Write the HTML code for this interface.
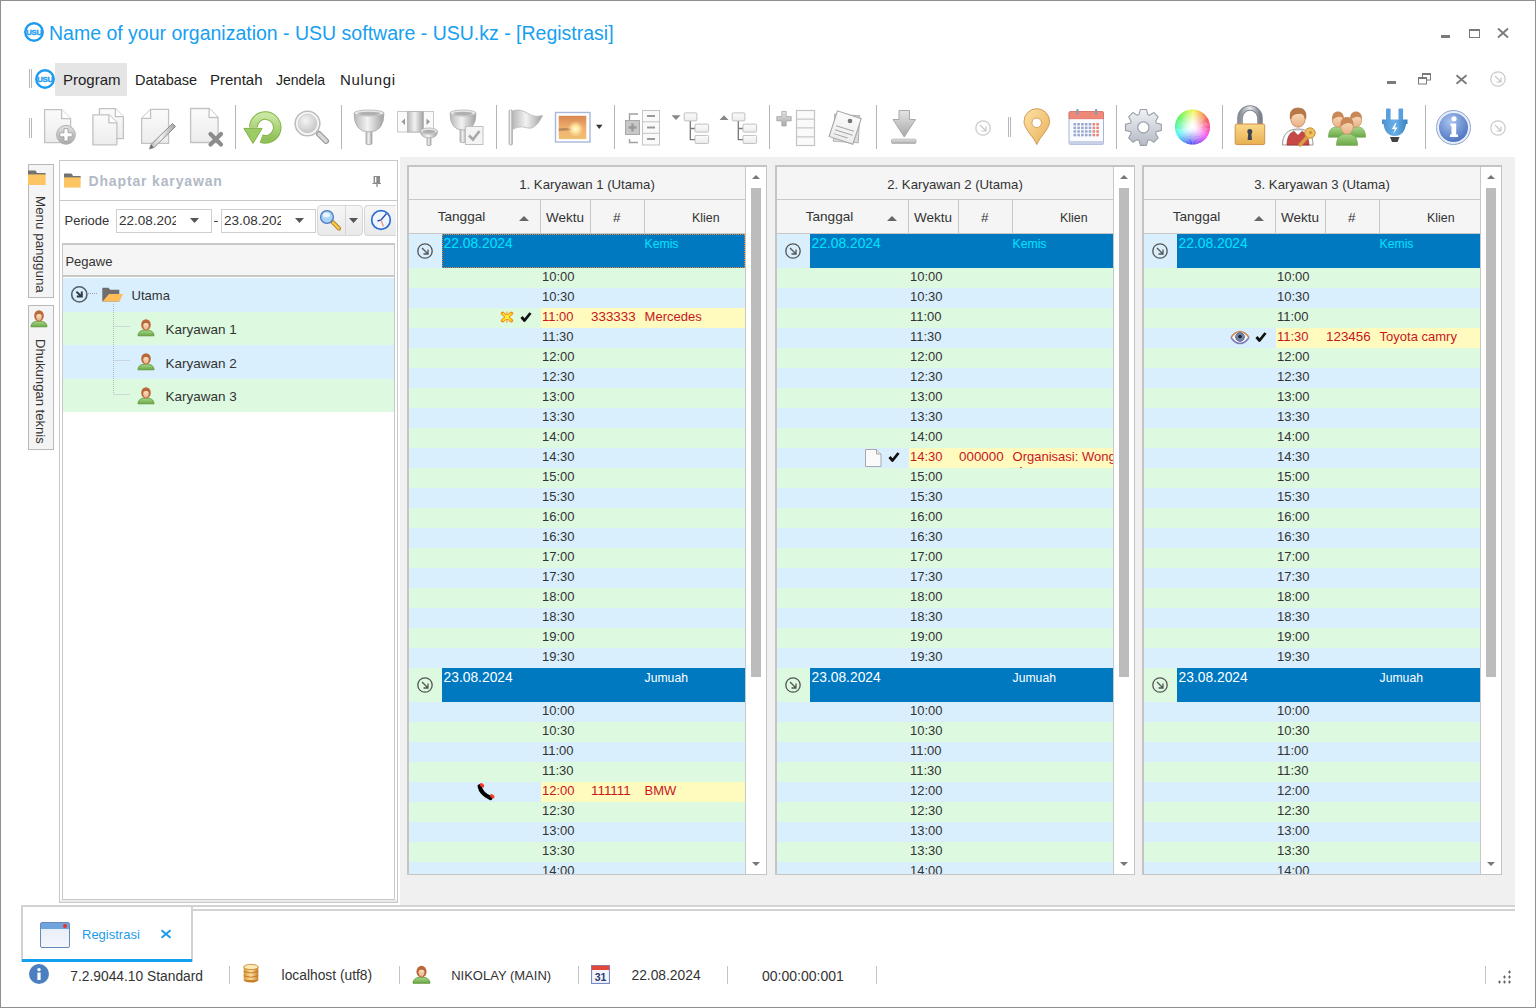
<!DOCTYPE html><html><head><meta charset="utf-8"><style>
html,body{margin:0;padding:0;}
body{width:1536px;height:1008px;overflow:hidden;position:relative;background:#fff;font-family:'Liberation Sans', sans-serif;}
div{box-sizing:border-box;}
svg{position:absolute;overflow:visible;}
</style></head><body><svg width="0" height="0" style="position:absolute"><defs>
<linearGradient id="gDoc" x1="0" y1="0" x2="0" y2="1"><stop offset="0" stop-color="#fbfbfb"/><stop offset="1" stop-color="#ececec"/></linearGradient>
<linearGradient id="gGray" x1="0" y1="0" x2="0" y2="1"><stop offset="0" stop-color="#e4e4e4"/><stop offset="1" stop-color="#a8a8a8"/></linearGradient>
<linearGradient id="gGrayH" x1="0" y1="0" x2="1" y2="0"><stop offset="0" stop-color="#b8b8b8"/><stop offset="0.45" stop-color="#f2f2f2"/><stop offset="1" stop-color="#a0a0a0"/></linearGradient>
<linearGradient id="gGreen" x1="0" y1="0" x2="0" y2="1"><stop offset="0" stop-color="#c8e6a0"/><stop offset="1" stop-color="#90c058"/></linearGradient>
<radialGradient id="gLens" cx="0.4" cy="0.35" r="0.7"><stop offset="0" stop-color="#f4f4f4"/><stop offset="1" stop-color="#c4c4c4"/></radialGradient>
<linearGradient id="gPin" x1="0" y1="0" x2="1" y2="1"><stop offset="0" stop-color="#fde3a8"/><stop offset="1" stop-color="#e8b058"/></linearGradient>
<linearGradient id="gLock" x1="0" y1="0" x2="0" y2="1"><stop offset="0" stop-color="#fbd88a"/><stop offset="1" stop-color="#e8b050"/></linearGradient>
<linearGradient id="gShackle" x1="0" y1="0" x2="1" y2="0"><stop offset="0" stop-color="#8a8f98"/><stop offset="0.5" stop-color="#e8eaee"/><stop offset="1" stop-color="#7a808a"/></linearGradient>
<linearGradient id="gPhoto" x1="0" y1="0" x2="0" y2="1"><stop offset="0" stop-color="#d88850"/><stop offset="0.55" stop-color="#f0b070"/><stop offset="1" stop-color="#f0c070"/></linearGradient>
<radialGradient id="gSun" cx="0.5" cy="0.5" r="0.5"><stop offset="0" stop-color="#fffbe0"/><stop offset="0.4" stop-color="#ffe7a0"/><stop offset="1" stop-color="#ffe0a0" stop-opacity="0"/></radialGradient>
<linearGradient id="gGear" x1="0" y1="0" x2="0" y2="1"><stop offset="0" stop-color="#f0f2f5"/><stop offset="1" stop-color="#b4bac4"/></linearGradient>
<radialGradient id="gInfo" cx="0.4" cy="0.3" r="0.75"><stop offset="0" stop-color="#a8c4ee"/><stop offset="1" stop-color="#4a70c0"/></radialGradient>
<linearGradient id="gPlug" x1="0" y1="0" x2="1" y2="0"><stop offset="0" stop-color="#4a90cc"/><stop offset="0.5" stop-color="#6ab0e8"/><stop offset="1" stop-color="#3a80c0"/></linearGradient>
<linearGradient id="gSkin" x1="0" y1="0" x2="0" y2="1"><stop offset="0" stop-color="#fde0c0"/><stop offset="1" stop-color="#e8b088"/></linearGradient>
<linearGradient id="gBodyG" x1="0" y1="0" x2="0" y2="1"><stop offset="0" stop-color="#a8d888"/><stop offset="1" stop-color="#6aa848"/></linearGradient>
<linearGradient id="gDB" x1="0" y1="0" x2="1" y2="0"><stop offset="0" stop-color="#d89838"/><stop offset="0.5" stop-color="#fde0a0"/><stop offset="1" stop-color="#c88028"/></linearGradient>
</defs></svg><div style="position:absolute;left:0px;top:0px;width:1536px;height:1008px;border:1px solid #8f8f8f;"></div><svg style="left:24px;top:22px" width="20" height="20" viewBox="0 0 20 20"><circle cx="10" cy="10" r="8.75" fill="none" stroke="#1e9bf0" stroke-width="2.4"/><text x="10" y="12.7" text-anchor="middle" font-family="Liberation Sans" font-weight="bold" font-size="7.8" letter-spacing="-0.4" fill="#1e9bf0" stroke="#1e9bf0" stroke-width="0.35">USU</text></svg><div style="position:absolute;left:49px;top:24.09px;font-size:19.5px;line-height:19.5px;height:19.5px;white-space:pre;color:#17a0f0;font-family:'Liberation Sans', sans-serif;letter-spacing:0px;">Name of your organization - USU software - USU.kz - [Registrasi]</div><div style="position:absolute;left:1441px;top:35px;width:9px;height:3px;background:#7a7a7a"></div><div style="position:absolute;left:1469px;top:29px;width:11px;height:9px;border:1px solid #7a7a7a;border-top-width:2px;"></div><svg style="left:1497px;top:28px" width="12" height="10" viewBox="0 0 12 10"><path d="M1 0.5L11 9.5M11 0.5L1 9.5" stroke="#7a7a7a" stroke-width="1.8"/></svg><div style="position:absolute;left:29px;top:69px;width:1px;height:19px;background:#b8b8b8"></div><div style="position:absolute;left:31px;top:69px;width:1px;height:19px;background:#b8b8b8"></div><svg style="left:35px;top:69px" width="20" height="20" viewBox="0 0 20 20"><circle cx="10" cy="10" r="8.75" fill="none" stroke="#1e9bf0" stroke-width="2.4"/><text x="10" y="12.7" text-anchor="middle" font-family="Liberation Sans" font-weight="bold" font-size="7.8" letter-spacing="-0.4" fill="#1e9bf0" stroke="#1e9bf0" stroke-width="0.35">USU</text></svg><div style="position:absolute;left:55px;top:63px;width:72px;height:33px;background:#e5e5e5;"></div><div style="position:absolute;left:63px;top:72.30px;font-size:15px;line-height:15px;height:15px;white-space:pre;color:#222;font-family:'Liberation Sans', sans-serif;letter-spacing:0px;">Program</div><div style="position:absolute;left:135px;top:72.73px;font-size:14.5px;line-height:14.5px;height:14.5px;white-space:pre;color:#222;font-family:'Liberation Sans', sans-serif;letter-spacing:0px;">Database</div><div style="position:absolute;left:210px;top:72.30px;font-size:15px;line-height:15px;height:15px;white-space:pre;color:#222;font-family:'Liberation Sans', sans-serif;letter-spacing:0px;">Prentah</div><div style="position:absolute;left:276px;top:73.15px;font-size:14px;line-height:14px;height:14px;white-space:pre;color:#222;font-family:'Liberation Sans', sans-serif;letter-spacing:0px;">Jendela</div><div style="position:absolute;left:340px;top:72.30px;font-size:15px;line-height:15px;height:15px;white-space:pre;color:#222;font-family:'Liberation Sans', sans-serif;letter-spacing:0.7px;">Nulungi</div><div style="position:absolute;left:1387px;top:81px;width:9px;height:3px;background:#7a7a7a"></div><svg style="left:1418px;top:73px" width="14" height="12" viewBox="0 0 14 12"><rect x="4.5" y="0.5" width="8" height="6.5" fill="none" stroke="#7a7a7a" stroke-width="1"/><rect x="4.5" y="0.5" width="8" height="1.5" fill="#7a7a7a"/><rect x="0.5" y="4.5" width="8" height="6.5" fill="#fff" stroke="#7a7a7a" stroke-width="1"/><rect x="0.5" y="4.5" width="8" height="1.5" fill="#7a7a7a"/></svg><svg style="left:1456px;top:75px" width="11" height="9" viewBox="0 0 11 9"><path d="M0.5 0.3L10.5 8.7M10.5 0.3L0.5 8.7" stroke="#7a7a7a" stroke-width="1.8"/></svg><svg style="left:1490px;top:71px" width="16" height="16" viewBox="0 0 16 16"><circle cx="8" cy="8" r="7.2" fill="none" stroke="#c8c8c8" stroke-width="1.2"/><path d="M5 5L11 11M11 6.5V11H6.5" fill="none" stroke="#c8c8c8" stroke-width="1.2"/></svg><div style="position:absolute;left:29px;top:118px;width:1px;height:20px;background:#b8b8b8"></div><div style="position:absolute;left:31px;top:118px;width:1px;height:20px;background:#b8b8b8"></div><div style="position:absolute;left:235px;top:105px;width:1px;height:44px;background:#b4b4b4"></div><div style="position:absolute;left:341px;top:105px;width:1px;height:44px;background:#b4b4b4"></div><div style="position:absolute;left:496px;top:105px;width:1px;height:44px;background:#b4b4b4"></div><div style="position:absolute;left:614px;top:105px;width:1px;height:44px;background:#b4b4b4"></div><div style="position:absolute;left:769px;top:105px;width:1px;height:44px;background:#b4b4b4"></div><div style="position:absolute;left:876px;top:105px;width:1px;height:44px;background:#b4b4b4"></div><div style="position:absolute;left:1116px;top:105px;width:1px;height:44px;background:#b4b4b4"></div><div style="position:absolute;left:1222px;top:105px;width:1px;height:44px;background:#b4b4b4"></div><div style="position:absolute;left:1425px;top:105px;width:1px;height:44px;background:#b4b4b4"></div><div style="position:absolute;left:1008px;top:117px;width:1px;height:20px;background:#b8b8b8"></div><div style="position:absolute;left:1010px;top:117px;width:1px;height:20px;background:#b8b8b8"></div><svg style="left:975px;top:120px" width="16" height="16" viewBox="0 0 16 16"><circle cx="8" cy="8" r="7.2" fill="none" stroke="#c8c8c8" stroke-width="1.2"/><path d="M5 5L11 11M11 6.5V11H6.5" fill="none" stroke="#c8c8c8" stroke-width="1.2"/></svg><svg style="left:1490px;top:120px" width="16" height="16" viewBox="0 0 16 16"><circle cx="8" cy="8" r="7.2" fill="none" stroke="#c8c8c8" stroke-width="1.2"/><path d="M5 5L11 11M11 6.5V11H6.5" fill="none" stroke="#c8c8c8" stroke-width="1.2"/></svg><svg style="left:40px;top:104px" width="40" height="44" viewBox="0 0 40 44"><path d="M4.6 5.6H21.6L30.6 14.6V38.6H4.6Z" fill="url(#gDoc)" stroke="#c2c2c2" stroke-width="1.3" stroke-linejoin="round"/><path d="M21.6 5.6V14.6H30.6" fill="#fff" stroke="#c2c2c2" stroke-width="1.3" stroke-linejoin="round"/><circle cx="26" cy="30.8" r="9.4" fill="url(#gGray)" stroke="#b0b0b0" stroke-width="1"/><path d="M24 24.6h4v4.2h4.2v4h-4.2v4.2h-4v-4.2h-4.2v-4h4.2z" fill="#fff" stroke="#9a9a9a" stroke-width="0.8"/></svg><svg style="left:88px;top:104px" width="40" height="44" viewBox="0 0 40 44"><path d="M11.4 4.6H27.4L35.4 12.6V34.6H11.4Z" fill="url(#gDoc)" stroke="#c2c2c2" stroke-width="1.3" stroke-linejoin="round"/><path d="M27.4 4.6V12.6H35.4" fill="#fff" stroke="#c2c2c2" stroke-width="1.3" stroke-linejoin="round"/><path d="M4.9 10.8H20.9L28.9 18.8V40.8H4.9Z" fill="url(#gDoc)" stroke="#c2c2c2" stroke-width="1.3" stroke-linejoin="round"/><path d="M20.9 10.8V18.8H28.9" fill="#fff" stroke="#c2c2c2" stroke-width="1.3" stroke-linejoin="round"/></svg><svg style="left:137px;top:104px" width="40" height="44" viewBox="0 0 40 44"><path d="M13.6 5.4H31.6V39.4H4.6V14.4Z" fill="url(#gDoc)" stroke="#c2c2c2" stroke-width="1.3" stroke-linejoin="round"/><path d="M13.6 5.4V14.4H4.6" fill="#fff" stroke="#c2c2c2" stroke-width="1.3" stroke-linejoin="round"/><path d="M35.5 19.5L38.5 22.5L17 43.5L12.5 45L14 40.5Z" fill="url(#gGrayH)" stroke="#8c8c8c" stroke-width="1" stroke-linejoin="round"/><path d="M13 44.5L14.3 40.8L16.6 43.2Z" fill="#666"/></svg><svg style="left:186px;top:104px" width="40" height="44" viewBox="0 0 40 44"><path d="M4.6 4.5H23.1L32.1 13.5V38.5H4.6Z" fill="url(#gDoc)" stroke="#c2c2c2" stroke-width="1.3" stroke-linejoin="round"/><path d="M23.1 4.5V13.5H32.1" fill="#fff" stroke="#c2c2c2" stroke-width="1.3" stroke-linejoin="round"/><path d="M24.5 30L35 40.5M35 30L24.5 40.5" stroke="#8c8c8c" stroke-width="4.2" stroke-linecap="round"/></svg><svg style="left:240px;top:104px" width="44" height="44" viewBox="0 0 44 44"><path d="M13.4 23.4A11.9 11.9 0 1 1 21.2 34.6" fill="none" stroke="#84b64a" stroke-width="8.6"/><path d="M13.4 23.4A11.9 11.9 0 1 1 21.2 34.6" fill="none" stroke="url(#gGreen)" stroke-width="6.6"/><path d="M3.9 24.4H22.1L13 39.4Z" fill="#9ccc64" stroke="#80b048" stroke-width="1" stroke-linejoin="round"/></svg><svg style="left:290px;top:104px" width="44" height="44" viewBox="0 0 44 44"><path d="M29 30L36 37" stroke="#9a9a9a" stroke-width="6" stroke-linecap="round"/><path d="M29 30L36 37" stroke="#d8d8d8" stroke-width="3.5" stroke-linecap="round"/><circle cx="17.5" cy="19.5" r="12.3" fill="#f8f8f8" stroke="#bcbcbc" stroke-width="1.6"/><circle cx="17.5" cy="19.5" r="9.4" fill="url(#gLens)" stroke="#cfcfcf" stroke-width="1"/></svg><svg style="left:346px;top:104px" width="44" height="44" viewBox="0 0 44 44"><path d="M20.0 26V40Q23 41.5 26.0 40V26Z" fill="url(#gGrayH)" stroke="#a8a8a8" stroke-width="0.8"/><path d="M8.0 9Q8.0 28 23 28Q38.0 28 38.0 9Z" fill="url(#gGrayH)" stroke="#a8a8a8" stroke-width="0.8"/><ellipse cx="23" cy="9" rx="15.0" ry="3" fill="#e8e8e8" stroke="#b4b4b4" stroke-width="0.8"/><ellipse cx="23" cy="9.6" rx="11.25" ry="1.8" fill="#b0b0b0"/></svg><svg style="left:394px;top:104px" width="46" height="44" viewBox="0 0 46 44"><rect x="3.5" y="7.5" width="36" height="20.5" fill="#fafafa" stroke="#c8c8c8" stroke-width="1"/><rect x="13.5" y="7.5" width="16" height="20.5" fill="url(#gGrayH)" stroke="#b8b8b8" stroke-width="1"/><path d="M7.5 17.8L11 14.5V21Z" fill="#999"/><path d="M36 17.8L32.5 14.5V21Z" fill="#999"/><path d="M33.0 32V41Q35 42.5 37.0 41V32Z" fill="url(#gGrayH)" stroke="#a8a8a8" stroke-width="0.8"/><path d="M26.5 27Q26.5 34 35 34Q43.5 34 43.5 27Z" fill="url(#gGrayH)" stroke="#a8a8a8" stroke-width="0.8"/><ellipse cx="35" cy="27" rx="8.5" ry="3" fill="#e8e8e8" stroke="#b4b4b4" stroke-width="0.8"/><ellipse cx="35" cy="27.6" rx="6.375" ry="1.8" fill="#b0b0b0"/></svg><svg style="left:446px;top:104px" width="44" height="44" viewBox="0 0 44 44"><path d="M14.0 24V38Q17 39.5 20.0 38V24Z" fill="url(#gGrayH)" stroke="#a8a8a8" stroke-width="0.8"/><path d="M4.0 9Q4.0 26 17 26Q30.0 26 30.0 9Z" fill="url(#gGrayH)" stroke="#a8a8a8" stroke-width="0.8"/><ellipse cx="17" cy="9" rx="13.0" ry="3" fill="#e8e8e8" stroke="#b4b4b4" stroke-width="0.8"/><ellipse cx="17" cy="9.6" rx="9.75" ry="1.8" fill="#b0b0b0"/><rect x="19.5" y="22.5" width="17.5" height="18" fill="#f4f4f4" stroke="#c0c0c0" stroke-width="1"/><path d="M23 31.5L27 35.5L33.5 27" fill="none" stroke="#a8a8a8" stroke-width="2.6"/></svg><svg style="left:504px;top:104px" width="44" height="44" viewBox="0 0 44 44"><rect x="5" y="6" width="3.4" height="35" rx="1.2" fill="url(#gGrayH)" stroke="#a0a0a0" stroke-width="0.6"/><path d="M8.5 7C14 5 19 6.5 24 9.5S33 13 38.5 11.5C36 17 32 23 27 24C22 25 18 20 8.5 25.5Z" fill="url(#gGrayH)" stroke="#b4b4b4" stroke-width="0.8"/></svg><svg style="left:552px;top:104px" width="56" height="44" viewBox="0 0 56 44"><rect x="3.5" y="8.5" width="34.5" height="29.5" fill="#fff" stroke="#a8b8d8" stroke-width="1.4"/><rect x="6.7" y="11.8" width="27.6" height="23.3" fill="url(#gPhoto)"/><path d="M6.7 24.5Q16 23 22 26L6.7 27Z" fill="#8a6848" opacity="0.55"/><circle cx="23.5" cy="25" r="8" fill="url(#gSun)"/><path d="M44 20.8H50.5L47.25 25.1Z" fill="#333"/></svg><svg style="left:620px;top:104px" width="44" height="44" viewBox="0 0 44 44"><path d="M9.5 16.5V10H18" fill="none" stroke="#a0a0a0" stroke-width="1.4"/><path d="M9.5 35V38.5H18" fill="none" stroke="#a0a0a0" stroke-width="1.4"/><rect x="5.5" y="16.5" width="14" height="14" fill="#c8c8c8" stroke="#a8a8a8" stroke-width="1"/><path d="M11.3 19.5h2.4v2.8h2.8v2.4h-2.8v2.8h-2.4v-2.8h-2.8v-2.4h2.8z" fill="#999"/><rect x="22.5" y="6.5" width="17" height="34.5" fill="#fafafa" stroke="#c4c4c4" stroke-width="1"/><path d="M22.5 17.8H39.5M22.5 29.3H39.5" stroke="#c4c4c4" stroke-width="1"/><path d="M27 12H35M27 23.5H35M27 35H35" stroke="#9a9a9a" stroke-width="2.2"/></svg><svg style="left:668px;top:104px" width="44" height="44" viewBox="0 0 44 44"><path d="M3.5 11.2H12.5L8 16Z" fill="#888"/><path d="M22.3 17V35.6H28M22.3 24.5H28" fill="none" stroke="#777" stroke-width="1.3"/><rect x="16.2" y="8.9" width="12.7" height="8" rx="1" fill="url(#gDoc)" stroke="#c0c0c0" stroke-width="1"/><rect x="27" y="20.1" width="13.6" height="8" rx="1" fill="url(#gDoc)" stroke="#c0c0c0" stroke-width="1"/><rect x="27" y="31.4" width="13.6" height="8" rx="1" fill="url(#gDoc)" stroke="#c0c0c0" stroke-width="1"/></svg><svg style="left:716px;top:104px" width="44" height="44" viewBox="0 0 44 44"><path d="M3.5 16H12.5L8 11.2Z" fill="#888"/><path d="M22.3 17V35.6H28M22.3 24.5H28" fill="none" stroke="#777" stroke-width="1.3"/><rect x="16.2" y="8.9" width="12.7" height="8" rx="1" fill="url(#gDoc)" stroke="#c0c0c0" stroke-width="1"/><rect x="27" y="20.1" width="13.6" height="8" rx="1" fill="url(#gDoc)" stroke="#c0c0c0" stroke-width="1"/><rect x="27" y="31.4" width="13.6" height="8" rx="1" fill="url(#gDoc)" stroke="#c0c0c0" stroke-width="1"/></svg><svg style="left:774px;top:104px" width="44" height="44" viewBox="0 0 44 44"><path d="M7.8 7.5h4.4v5h5v4.4h-5v5h-4.4v-5h-5v-4.4h5z" fill="url(#gGray)" stroke="#a8a8a8" stroke-width="0.8"/><rect x="22.5" y="6.5" width="18" height="35" fill="#fafafa" stroke="#c4c4c4" stroke-width="1.2"/><path d="M22.5 15.2H40.5M22.5 23.8H40.5M22.5 32.8H40.5" stroke="#c8c8c8" stroke-width="1.2"/></svg><svg style="left:824px;top:106px" width="44" height="44" viewBox="0 0 44 44"><rect x="10" y="9" width="25" height="27" fill="#dcdcdc" stroke="#b0b0b0" stroke-width="1" transform="rotate(3 22 22)"/><rect x="8.5" y="8" width="25" height="27" fill="url(#gDoc)" stroke="#a8a8a8" stroke-width="1.1" transform="rotate(18 21 22)"/><path d="M12 20L30 25M11 24L29 29M10 28L24 32" stroke="#a8a8a8" stroke-width="1" transform="rotate(2 21 22)"/><circle cx="26" cy="15" r="2.3" fill="#777"/></svg><svg style="left:886px;top:104px" width="36" height="44" viewBox="0 0 36 44"><path d="M13 6.5H23.5V15.5H29.5L18.25 33L7 15.5H13Z" fill="url(#gGray)" stroke="#a8a8a8" stroke-width="1" stroke-linejoin="round"/><rect x="5.5" y="35.2" width="24.5" height="4.2" rx="1" fill="url(#gGray)" stroke="#b0b0b0" stroke-width="0.8"/></svg><svg style="left:1020px;top:104px" width="36" height="44" viewBox="0 0 36 44"><path d="M16.8 40.6C14 33 4 25 4 17.5A12.8 12.8 0 0 1 29.6 17.5C29.6 25 19.6 33 16.8 40.6Z" fill="url(#gPin)" stroke="#d39a52" stroke-width="1"/><circle cx="16.7" cy="18.8" r="4.8" fill="#fff" stroke="#d8a060" stroke-width="1"/></svg><svg style="left:1064px;top:104px" width="44" height="44" viewBox="0 0 44 44"><rect x="5" y="7.5" width="34.5" height="33" rx="1.5" fill="#fafbff" stroke="#a8b4d8" stroke-width="1"/><rect x="5" y="37" width="34.5" height="3.5" fill="#c8d0e8"/><path d="M5 14.7V9A1.5 1.5 0 0 1 6.5 7.5H38A1.5 1.5 0 0 1 39.5 9V14.7Z" fill="#f08878" stroke="#e07060" stroke-width="0.8"/><rect x="12.3" y="5" width="2.2" height="6" rx="1" fill="#8898b0"/><rect x="31" y="5" width="2.2" height="6" rx="1" fill="#8898b0"/><rect x="9.50" y="19.00" width="2.6" height="2.5" fill="#9aa8d0"/><rect x="13.30" y="19.00" width="2.6" height="2.5" fill="#9aa8d0"/><rect x="17.10" y="19.00" width="2.6" height="2.5" fill="#9aa8d0"/><rect x="20.90" y="19.00" width="2.6" height="2.5" fill="#9aa8d0"/><rect x="24.70" y="19.00" width="2.6" height="2.5" fill="#9aa8d0"/><rect x="28.50" y="19.00" width="2.6" height="2.5" fill="#e88878"/><rect x="32.30" y="19.00" width="2.6" height="2.5" fill="#e88878"/><rect x="9.50" y="22.60" width="2.6" height="2.5" fill="#9aa8d0"/><rect x="13.30" y="22.60" width="2.6" height="2.5" fill="#9aa8d0"/><rect x="17.10" y="22.60" width="2.6" height="2.5" fill="#9aa8d0"/><rect x="20.90" y="22.60" width="2.6" height="2.5" fill="#9aa8d0"/><rect x="24.70" y="22.60" width="2.6" height="2.5" fill="#9aa8d0"/><rect x="28.50" y="22.60" width="2.6" height="2.5" fill="#e88878"/><rect x="32.30" y="22.60" width="2.6" height="2.5" fill="#e88878"/><rect x="9.50" y="26.20" width="2.6" height="2.5" fill="#9aa8d0"/><rect x="13.30" y="26.20" width="2.6" height="2.5" fill="#9aa8d0"/><rect x="17.10" y="26.20" width="2.6" height="2.5" fill="#9aa8d0"/><rect x="20.90" y="26.20" width="2.6" height="2.5" fill="#9aa8d0"/><rect x="24.70" y="26.20" width="2.6" height="2.5" fill="#9aa8d0"/><rect x="28.50" y="26.20" width="2.6" height="2.5" fill="#e88878"/><rect x="32.30" y="26.20" width="2.6" height="2.5" fill="#e88878"/><rect x="9.50" y="29.80" width="2.6" height="2.5" fill="#9aa8d0"/><rect x="13.30" y="29.80" width="2.6" height="2.5" fill="#9aa8d0"/><rect x="17.10" y="29.80" width="2.6" height="2.5" fill="#9aa8d0"/><rect x="20.90" y="29.80" width="2.6" height="2.5" fill="#9aa8d0"/><rect x="24.70" y="29.80" width="2.6" height="2.5" fill="#9aa8d0"/><rect x="28.50" y="29.80" width="2.6" height="2.5" fill="#e88878"/><rect x="32.30" y="29.80" width="2.6" height="2.5" fill="#e88878"/></svg><svg style="left:1124px;top:104px" width="40" height="44" viewBox="0 0 40 44"><polygon points="14.97,10.54 16.40,5.45 22.40,5.45 23.83,10.54 25.36,11.18 29.97,8.58 34.22,12.83 31.62,17.44 32.26,18.97 37.35,20.40 37.35,26.40 32.26,27.83 31.62,29.36 34.22,33.97 29.97,38.22 25.36,35.62 23.83,36.26 22.40,41.35 16.40,41.35 14.97,36.26 13.44,35.62 8.83,38.22 4.58,33.97 7.18,29.36 6.54,27.83 1.45,26.40 1.45,20.40 6.54,18.97 7.18,17.44 4.58,12.83 8.83,8.58 13.44,11.18" fill="url(#gGear)" stroke="#9aa0aa" stroke-width="1.1" stroke-linejoin="round"/><circle cx="19.4" cy="23.4" r="5.6" fill="#fff" stroke="#9aa0aa" stroke-width="1.3"/></svg><svg style="left:1175px;top:104px" width="40" height="44" viewBox="0 0 40 44"><defs><radialGradient id="gWh" cx="0.5" cy="0.5" r="0.5"><stop offset="0" stop-color="#fff"/><stop offset="0.2" stop-color="#fff" stop-opacity="0.9"/><stop offset="1" stop-color="#fff" stop-opacity="0"/></radialGradient></defs><path d="M17.5 23L35.00 23.00A17.5 17.5 0 0 1 34.92 24.68Z" fill="hsl(332,90%,62%)"/><path d="M17.5 23L34.93 24.53A17.5 17.5 0 0 1 34.71 26.19Z" fill="hsl(328,90%,62%)"/><path d="M17.5 23L34.73 26.04A17.5 17.5 0 0 1 34.36 27.68Z" fill="hsl(322,90%,62%)"/><path d="M17.5 23L34.40 27.53A17.5 17.5 0 0 1 33.89 29.13Z" fill="hsl(318,90%,62%)"/><path d="M17.5 23L33.94 28.99A17.5 17.5 0 0 1 33.30 30.53Z" fill="hsl(312,90%,62%)"/><path d="M17.5 23L33.36 30.40A17.5 17.5 0 0 1 32.58 31.88Z" fill="hsl(308,90%,62%)"/><path d="M17.5 23L32.66 31.75A17.5 17.5 0 0 1 31.75 33.16Z" fill="hsl(302,90%,62%)"/><path d="M17.5 23L31.84 33.04A17.5 17.5 0 0 1 30.81 34.37Z" fill="hsl(298,90%,62%)"/><path d="M17.5 23L30.91 34.25A17.5 17.5 0 0 1 29.77 35.48Z" fill="hsl(292,90%,62%)"/><path d="M17.5 23L29.87 35.37A17.5 17.5 0 0 1 28.63 36.50Z" fill="hsl(288,90%,62%)"/><path d="M17.5 23L28.75 36.41A17.5 17.5 0 0 1 27.41 37.42Z" fill="hsl(282,90%,62%)"/><path d="M17.5 23L27.54 37.34A17.5 17.5 0 0 1 26.12 38.23Z" fill="hsl(278,90%,62%)"/><path d="M17.5 23L26.25 38.16A17.5 17.5 0 0 1 24.76 38.92Z" fill="hsl(272,90%,62%)"/><path d="M17.5 23L24.90 38.86A17.5 17.5 0 0 1 23.34 39.50Z" fill="hsl(268,90%,62%)"/><path d="M17.5 23L23.49 39.44A17.5 17.5 0 0 1 21.88 39.94Z" fill="hsl(262,90%,62%)"/><path d="M17.5 23L22.03 39.90A17.5 17.5 0 0 1 20.39 40.26Z" fill="hsl(258,90%,62%)"/><path d="M17.5 23L20.54 40.23A17.5 17.5 0 0 1 18.87 40.45Z" fill="hsl(252,90%,62%)"/><path d="M17.5 23L19.03 40.43A17.5 17.5 0 0 1 17.35 40.50Z" fill="hsl(248,90%,62%)"/><path d="M17.5 23L17.50 40.50A17.5 17.5 0 0 1 15.82 40.42Z" fill="hsl(242,90%,62%)"/><path d="M17.5 23L15.97 40.43A17.5 17.5 0 0 1 14.31 40.21Z" fill="hsl(238,90%,62%)"/><path d="M17.5 23L14.46 40.23A17.5 17.5 0 0 1 12.82 39.86Z" fill="hsl(232,90%,62%)"/><path d="M17.5 23L12.97 39.90A17.5 17.5 0 0 1 11.37 39.39Z" fill="hsl(228,90%,62%)"/><path d="M17.5 23L11.51 39.44A17.5 17.5 0 0 1 9.97 38.80Z" fill="hsl(222,90%,62%)"/><path d="M17.5 23L10.10 38.86A17.5 17.5 0 0 1 8.62 38.08Z" fill="hsl(218,90%,62%)"/><path d="M17.5 23L8.75 38.16A17.5 17.5 0 0 1 7.34 37.25Z" fill="hsl(212,90%,62%)"/><path d="M17.5 23L7.46 37.34A17.5 17.5 0 0 1 6.13 36.31Z" fill="hsl(208,90%,62%)"/><path d="M17.5 23L6.25 36.41A17.5 17.5 0 0 1 5.02 35.27Z" fill="hsl(202,90%,62%)"/><path d="M17.5 23L5.13 35.37A17.5 17.5 0 0 1 4.00 34.13Z" fill="hsl(198,90%,62%)"/><path d="M17.5 23L4.09 34.25A17.5 17.5 0 0 1 3.08 32.91Z" fill="hsl(192,90%,62%)"/><path d="M17.5 23L3.16 33.04A17.5 17.5 0 0 1 2.27 31.62Z" fill="hsl(188,90%,62%)"/><path d="M17.5 23L2.34 31.75A17.5 17.5 0 0 1 1.58 30.26Z" fill="hsl(182,90%,62%)"/><path d="M17.5 23L1.64 30.40A17.5 17.5 0 0 1 1.00 28.84Z" fill="hsl(178,90%,62%)"/><path d="M17.5 23L1.06 28.99A17.5 17.5 0 0 1 0.56 27.38Z" fill="hsl(172,90%,62%)"/><path d="M17.5 23L0.60 27.53A17.5 17.5 0 0 1 0.24 25.89Z" fill="hsl(168,90%,62%)"/><path d="M17.5 23L0.27 26.04A17.5 17.5 0 0 1 0.05 24.37Z" fill="hsl(162,90%,62%)"/><path d="M17.5 23L0.07 24.53A17.5 17.5 0 0 1 0.00 22.85Z" fill="hsl(158,90%,62%)"/><path d="M17.5 23L0.00 23.00A17.5 17.5 0 0 1 0.08 21.32Z" fill="hsl(152,90%,62%)"/><path d="M17.5 23L0.07 21.47A17.5 17.5 0 0 1 0.29 19.81Z" fill="hsl(148,90%,62%)"/><path d="M17.5 23L0.27 19.96A17.5 17.5 0 0 1 0.64 18.32Z" fill="hsl(142,90%,62%)"/><path d="M17.5 23L0.60 18.47A17.5 17.5 0 0 1 1.11 16.87Z" fill="hsl(138,90%,62%)"/><path d="M17.5 23L1.06 17.01A17.5 17.5 0 0 1 1.70 15.47Z" fill="hsl(132,90%,62%)"/><path d="M17.5 23L1.64 15.60A17.5 17.5 0 0 1 2.42 14.12Z" fill="hsl(128,90%,62%)"/><path d="M17.5 23L2.34 14.25A17.5 17.5 0 0 1 3.25 12.84Z" fill="hsl(122,90%,62%)"/><path d="M17.5 23L3.16 12.96A17.5 17.5 0 0 1 4.19 11.63Z" fill="hsl(118,90%,62%)"/><path d="M17.5 23L4.09 11.75A17.5 17.5 0 0 1 5.23 10.52Z" fill="hsl(112,90%,62%)"/><path d="M17.5 23L5.13 10.63A17.5 17.5 0 0 1 6.37 9.50Z" fill="hsl(108,90%,62%)"/><path d="M17.5 23L6.25 9.59A17.5 17.5 0 0 1 7.59 8.58Z" fill="hsl(102,90%,62%)"/><path d="M17.5 23L7.46 8.66A17.5 17.5 0 0 1 8.88 7.77Z" fill="hsl(98,90%,62%)"/><path d="M17.5 23L8.75 7.84A17.5 17.5 0 0 1 10.24 7.08Z" fill="hsl(92,90%,62%)"/><path d="M17.5 23L10.10 7.14A17.5 17.5 0 0 1 11.66 6.50Z" fill="hsl(88,90%,62%)"/><path d="M17.5 23L11.51 6.56A17.5 17.5 0 0 1 13.12 6.06Z" fill="hsl(82,90%,62%)"/><path d="M17.5 23L12.97 6.10A17.5 17.5 0 0 1 14.61 5.74Z" fill="hsl(78,90%,62%)"/><path d="M17.5 23L14.46 5.77A17.5 17.5 0 0 1 16.13 5.55Z" fill="hsl(72,90%,62%)"/><path d="M17.5 23L15.97 5.57A17.5 17.5 0 0 1 17.65 5.50Z" fill="hsl(68,90%,62%)"/><path d="M17.5 23L17.50 5.50A17.5 17.5 0 0 1 19.18 5.58Z" fill="hsl(62,90%,62%)"/><path d="M17.5 23L19.03 5.57A17.5 17.5 0 0 1 20.69 5.79Z" fill="hsl(58,90%,62%)"/><path d="M17.5 23L20.54 5.77A17.5 17.5 0 0 1 22.18 6.14Z" fill="hsl(52,90%,62%)"/><path d="M17.5 23L22.03 6.10A17.5 17.5 0 0 1 23.63 6.61Z" fill="hsl(48,90%,62%)"/><path d="M17.5 23L23.49 6.56A17.5 17.5 0 0 1 25.03 7.20Z" fill="hsl(42,90%,62%)"/><path d="M17.5 23L24.90 7.14A17.5 17.5 0 0 1 26.38 7.92Z" fill="hsl(38,90%,62%)"/><path d="M17.5 23L26.25 7.84A17.5 17.5 0 0 1 27.66 8.75Z" fill="hsl(32,90%,62%)"/><path d="M17.5 23L27.54 8.66A17.5 17.5 0 0 1 28.87 9.69Z" fill="hsl(28,90%,62%)"/><path d="M17.5 23L28.75 9.59A17.5 17.5 0 0 1 29.98 10.73Z" fill="hsl(22,90%,62%)"/><path d="M17.5 23L29.87 10.63A17.5 17.5 0 0 1 31.00 11.87Z" fill="hsl(18,90%,62%)"/><path d="M17.5 23L30.91 11.75A17.5 17.5 0 0 1 31.92 13.09Z" fill="hsl(12,90%,62%)"/><path d="M17.5 23L31.84 12.96A17.5 17.5 0 0 1 32.73 14.38Z" fill="hsl(8,90%,62%)"/><path d="M17.5 23L32.66 14.25A17.5 17.5 0 0 1 33.42 15.74Z" fill="hsl(2,90%,62%)"/><path d="M17.5 23L33.36 15.60A17.5 17.5 0 0 1 34.00 17.16Z" fill="hsl(358,90%,62%)"/><path d="M17.5 23L33.94 17.01A17.5 17.5 0 0 1 34.44 18.62Z" fill="hsl(352,90%,62%)"/><path d="M17.5 23L34.40 18.47A17.5 17.5 0 0 1 34.76 20.11Z" fill="hsl(348,90%,62%)"/><path d="M17.5 23L34.73 19.96A17.5 17.5 0 0 1 34.95 21.63Z" fill="hsl(342,90%,62%)"/><path d="M17.5 23L34.93 21.47A17.5 17.5 0 0 1 35.00 23.15Z" fill="hsl(338,90%,62%)"/><circle cx="17.5" cy="23" r="17.5" fill="url(#gWh)"/></svg><svg style="left:1232px;top:104px" width="36" height="44" viewBox="0 0 36 44"><path d="M8 21V14A10 10 0 0 1 28 14V21" fill="none" stroke="#808690" stroke-width="5.6"/><path d="M8 21V14A10 10 0 0 1 28 14V21" fill="none" stroke="url(#gShackle)" stroke-width="3.6"/><rect x="3.2" y="20" width="29.5" height="20.6" rx="1.5" fill="url(#gLock)" stroke="#d0904a" stroke-width="1"/><circle cx="17.8" cy="27.5" r="2.5" fill="#3c4452"/><path d="M16.3 28.5H19.3L20 36H15.6Z" fill="#3c4452"/></svg><svg style="left:1280px;top:104px" width="40" height="44" viewBox="0 0 40 44"><path d="M2.5 41C2.5 31 7 25 18 25S33 31 33 41Z" fill="#fafafa" stroke="#999" stroke-width="1"/><path d="M7 41C7.5 32 10 27 18 27S28 32 29 41Z" fill="#c84848" stroke="#a03030" stroke-width="0.8"/><path d="M13 26L18 31L23 26Z" fill="#fff" stroke="#aaa" stroke-width="0.6"/><ellipse cx="18" cy="15" rx="7.2" ry="8.2" fill="url(#gSkin)" stroke="#c08050" stroke-width="0.8"/><path d="M10.5 15C9 7 13 4 18 4S27.5 7 25.5 15C24.5 10 22 9 18 9.5S12 11 10.5 15Z" fill="#b87848" stroke="#986030" stroke-width="0.6"/><path d="M20 41L29 31" stroke="#d8a040" stroke-width="3.4" stroke-linecap="round"/><circle cx="30" cy="29" r="5.2" fill="#f0c060" stroke="#c89038" stroke-width="1"/><circle cx="30.5" cy="28.5" r="1.6" fill="#c89038"/></svg><svg style="left:1326px;top:104px" width="44" height="44" viewBox="0 0 44 44"><path d="M2.5 33.15C2.5 25.55 6.300000000000001 22.7 12 22.7S21.5 25.55 21.5 33.15Z" fill="url(#gBodyG)" stroke="#78a858" stroke-width="0.8"/><ellipse cx="12" cy="16.049999999999997" rx="5.699999999999999" ry="7.125" fill="url(#gSkin)" stroke="#c89060" stroke-width="0.7"/><path d="M6.300000000000001 16.049999999999997C5.3500000000000005 9.4 9.15 7.5 12 7.5S18.65 9.4 17.7 16.049999999999997C16.75 12.25 12 11.3 6.300000000000001 16.049999999999997Z" fill="#c88858"/><path d="M20.5 33.15C20.5 25.55 24.3 22.7 30 22.7S39.5 25.55 39.5 33.15Z" fill="url(#gBodyG)" stroke="#78a858" stroke-width="0.8"/><ellipse cx="30" cy="16.049999999999997" rx="5.699999999999999" ry="7.125" fill="url(#gSkin)" stroke="#c89060" stroke-width="0.7"/><path d="M24.3 16.049999999999997C23.35 9.4 27.15 7.5 30 7.5S36.65 9.4 35.7 16.049999999999997C34.75 12.25 30 11.3 24.3 16.049999999999997Z" fill="#c88858"/><path d="M10.5 41.35C10.5 32.95 14.7 29.8 21 29.8S31.5 32.95 31.5 41.35Z" fill="url(#gBodyG)" stroke="#78a858" stroke-width="0.8"/><ellipse cx="21" cy="22.450000000000003" rx="6.300000000000001" ry="7.875" fill="url(#gSkin)" stroke="#c89060" stroke-width="0.7"/><path d="M14.7 22.450000000000003C13.649999999999999 15.1 17.85 13 21 13S28.35 15.1 27.3 22.450000000000003C26.25 18.25 21 17.2 14.7 22.450000000000003Z" fill="#c88858"/></svg><svg style="left:1378px;top:104px" width="36" height="44" viewBox="0 0 36 44"><rect x="8" y="4.5" width="4.6" height="12" rx="1" fill="#5aa0dc"/><rect x="20.5" y="4.5" width="4.6" height="12" rx="1" fill="#5aa0dc"/><path d="M4 15.5H29.5V20H28C27 28 23 32 16.8 32S6.5 28 5.5 20H4Z" fill="url(#gPlug)"/><path d="M17.5 19L13.8 25H16.8L15.3 29.5L19.8 23.5H16.8L18.5 19Z" fill="#fff"/><path d="M12 33H21.5L19.5 38H14Z" fill="#444"/></svg><svg style="left:1432px;top:104px" width="44" height="44" viewBox="0 0 44 44"><circle cx="21.5" cy="23.5" r="17" fill="#e8eef8" stroke="#8fa4d0" stroke-width="1"/><circle cx="21.5" cy="23.5" r="14.5" fill="url(#gInfo)"/><circle cx="22" cy="14.8" r="2.6" fill="#fff"/><path d="M18.5 19.5H24.2V30.5H26V33H18V30.5H19.5V22H18.5Z" fill="#fff"/></svg><div style="position:absolute;left:400px;top:157px;width:1115px;height:748px;background:#f0f0f0;"></div><div style="position:absolute;left:28px;top:164px;width:26px;height:134px;background:#f4f4f4;border:1px solid #b9b9b9;"></div><div style="position:absolute;left:28px;top:305px;width:26px;height:145px;background:#f4f4f4;border:1px solid #b9b9b9;"></div><div style="position:absolute;left:34px;top:196px;transform-origin:0 0;transform:translate(13px,0) rotate(90deg);font-size:13.4px;line-height:13px;white-space:pre;color:#333;">Menu pangguna</div><div style="position:absolute;left:34px;top:339px;transform-origin:0 0;transform:translate(13px,0) rotate(90deg);font-size:13.1px;line-height:13px;white-space:pre;color:#333;">Dhukungan teknis</div><div style="position:absolute;left:59px;top:160px;width:339px;height:743px;border:1px solid #c8c8c8;background:#fff;"></div><div style="position:absolute;left:60px;top:200px;width:337px;height:1px;background:#c8c8c8"></div><div style="position:absolute;left:88.5px;top:174.35px;font-size:14px;line-height:14px;height:14px;white-space:pre;color:#b2bac6;font-family:'Liberation Sans', sans-serif;font-weight:bold;letter-spacing:0.85px;">Dhaptar karyawan</div><div style="position:absolute;left:64.5px;top:214.00px;font-size:13px;line-height:13px;height:13px;white-space:pre;color:#333;font-family:'Liberation Sans', sans-serif;">Periode</div><div style="position:absolute;left:116px;top:209px;width:96px;height:24px;border:1px solid #cfcfcf;background:#fff;"></div><div style="position:absolute;left:221px;top:209px;width:95px;height:24px;border:1px solid #cfcfcf;background:#fff;"></div><div style="position:absolute;left:119px;top:212px;width:57px;height:16px;overflow:hidden;"><div style="position:absolute;left:0px;top:1.57px;font-size:13.5px;line-height:13.5px;height:13.5px;white-space:pre;color:#333;font-family:'Liberation Sans', sans-serif;">22.08.2024</div></div><div style="position:absolute;left:224px;top:212px;width:57px;height:16px;overflow:hidden;"><div style="position:absolute;left:0px;top:1.57px;font-size:13.5px;line-height:13.5px;height:13.5px;white-space:pre;color:#333;font-family:'Liberation Sans', sans-serif;">23.08.2024</div></div><svg style="left:190px;top:218px" width="9" height="5"><path d="M0 0H9L4.5 5Z" fill="#555"/></svg><svg style="left:295px;top:218px" width="9" height="5"><path d="M0 0H9L4.5 5Z" fill="#555"/></svg><div style="position:absolute;left:214px;top:221px;width:4px;height:1px;background:#444"></div><div style="position:absolute;left:317px;top:205px;width:46px;height:31px;border:1px solid #d6d6d6;border-radius:4px;background:linear-gradient(#f6f6f6,#e9e9e9);"></div><div style="position:absolute;left:345px;top:206px;width:1px;height:29px;background:#d6d6d6"></div><svg style="left:349px;top:218px" width="9" height="5"><path d="M0 0H9L4.5 5Z" fill="#555"/></svg><div style="position:absolute;left:364px;top:205px;width:32px;height:31px;border:1px solid #d6d6d6;border-right:none;border-radius:4px 0 0 4px;background:linear-gradient(#f6f6f6,#e9e9e9);"></div><div style="position:absolute;left:60px;top:900px;width:337px;height:2px;background:#ebebeb"></div><div style="position:absolute;left:62px;top:243px;width:333px;height:657px;border:2px solid #c8c8c8;border-width:2px 1px 1px 1px;background:#fff;"></div><div style="position:absolute;left:63px;top:245px;width:331px;height:32px;background:#f5f5f5;border-bottom:2px solid #c8c8c8;"></div><div style="position:absolute;left:65.4px;top:255.00px;font-size:13px;line-height:13px;height:13px;white-space:pre;color:#333;font-family:'Liberation Sans', sans-serif;">Pegawe</div><div style="position:absolute;left:63px;top:278px;width:331px;height:34px;background:#d9effd"></div><div style="position:absolute;left:63px;top:312px;width:331px;height:33px;background:#ddf9e0"></div><div style="position:absolute;left:63px;top:345px;width:331px;height:34px;background:#d9effd"></div><div style="position:absolute;left:63px;top:379px;width:331px;height:33px;background:#ddf9e0"></div><div style="position:absolute;left:131.6px;top:289.00px;font-size:13px;line-height:13px;height:13px;white-space:pre;color:#333;font-family:'Liberation Sans', sans-serif;">Utama</div><div style="position:absolute;left:165.4px;top:322.57px;font-size:13.5px;line-height:13.5px;height:13.5px;white-space:pre;color:#333;font-family:'Liberation Sans', sans-serif;">Karyawan 1</div><div style="position:absolute;left:165.4px;top:356.57px;font-size:13.5px;line-height:13.5px;height:13.5px;white-space:pre;color:#333;font-family:'Liberation Sans', sans-serif;">Karyawan 2</div><div style="position:absolute;left:165.4px;top:390.07px;font-size:13.5px;line-height:13.5px;height:13.5px;white-space:pre;color:#333;font-family:'Liberation Sans', sans-serif;">Karyawan 3</div><div style="position:absolute;left:407px;top:165px;width:360px;height:710px;border:2px solid #c4c4c4;border-right-width:1px;border-bottom-width:1px;background:#fff;"></div><div style="position:absolute;left:409px;top:167px;width:336px;height:32px;background:#f5f5f5"></div><div style="position:absolute;left:409px;top:199px;width:336px;height:1px;background:#c8c8c8"></div><div style="position:absolute;left:409px;top:200px;width:336px;height:33px;background:#f5f5f5"></div><div style="position:absolute;left:409px;top:233px;width:336px;height:1px;background:#c8c8c8"></div><div style="position:absolute;left:540px;top:200px;width:1px;height:33px;background:#c8c8c8"></div><div style="position:absolute;left:590px;top:200px;width:1px;height:33px;background:#c8c8c8"></div><div style="position:absolute;left:644px;top:200px;width:1px;height:33px;background:#c8c8c8"></div><div style="position:absolute;left:407px;top:177.5px;width:360px;text-align:center;font-size:13.2px;line-height:13.2px;white-space:pre;color:#333;">1. Karyawan 1 (Utama)</div><div style="position:absolute;left:437.7px;top:210.49px;font-size:13.6px;line-height:13.6px;height:13.6px;white-space:pre;color:#333;font-family:'Liberation Sans', sans-serif;">Tanggal</div><svg style="left:519px;top:216px" width="10" height="5"><path d="M0 5H10L5 0Z" fill="#666"/></svg><div style="position:absolute;left:546px;top:210.87px;font-size:13.5px;line-height:13.5px;height:13.5px;white-space:pre;color:#333;font-family:'Liberation Sans', sans-serif;">Wektu</div><div style="position:absolute;left:613px;top:210.87px;font-size:13.5px;line-height:13.5px;height:13.5px;white-space:pre;color:#333;font-family:'Liberation Sans', sans-serif;">#</div><div style="position:absolute;left:692px;top:211.80px;font-size:12.4px;line-height:12.4px;height:12.4px;white-space:pre;color:#333;font-family:'Liberation Sans', sans-serif;">Klien</div><div style="position:absolute;left:0;top:0;width:745px;height:874px;overflow:hidden;"><div style="position:absolute;left:409px;top:234px;width:336px;height:34px;background:#d9effd"></div><div style="position:absolute;left:442px;top:234px;width:303px;height:34px;background:#0079c1;border:1px dotted #f08030;"></div><svg style="left:417px;top:243px" width="16" height="16" viewBox="0 0 16 16"><circle cx="8" cy="8" r="7.2" fill="none" stroke="#555" stroke-width="1.3"/><path d="M5 5L11 11M11 6.5V11H6.5" fill="none" stroke="#555" stroke-width="1.3"/></svg><div style="position:absolute;left:443.6px;top:236.82px;font-size:13.8px;line-height:13.8px;height:13.8px;white-space:pre;color:#00e4ff;font-family:'Liberation Sans', sans-serif;">22.08.2024</div><div style="position:absolute;left:644.6px;top:238.17px;font-size:12.2px;line-height:12.2px;height:12.2px;white-space:pre;color:#00e4ff;font-family:'Liberation Sans', sans-serif;">Kemis</div><div style="position:absolute;left:409px;top:268px;width:336px;height:20px;background:#ddf9e0"></div><div style="position:absolute;left:542px;top:270.00px;font-size:13px;line-height:13px;height:13px;white-space:pre;color:#333;font-family:'Liberation Sans', sans-serif;">10:00</div><div style="position:absolute;left:409px;top:288px;width:336px;height:20px;background:#d9effd"></div><div style="position:absolute;left:542px;top:290.00px;font-size:13px;line-height:13px;height:13px;white-space:pre;color:#333;font-family:'Liberation Sans', sans-serif;">10:30</div><div style="position:absolute;left:409px;top:308px;width:336px;height:20px;background:#ddf9e0"></div><div style="position:absolute;left:541px;top:308px;width:204px;height:20px;background:#fffbbe"></div><div style="position:absolute;left:542px;top:310.00px;font-size:13px;line-height:13px;height:13px;white-space:pre;color:#c8161e;font-family:'Liberation Sans', sans-serif;">11:00</div><div style="position:absolute;left:591px;top:309.66px;font-size:13.4px;line-height:13.4px;height:13.4px;white-space:pre;color:#c8161e;font-family:'Liberation Sans', sans-serif;">333333</div><div style="position:absolute;left:644.6px;top:310.00px;font-size:13px;line-height:13px;height:13px;white-space:pre;color:#c8161e;font-family:'Liberation Sans', sans-serif;">Mercedes</div><svg style="left:500px;top:310px" width="14" height="14" viewBox="0 0 14 14"><path d="M7 1.5V12.8" stroke="#f5a030" stroke-width="1.2"/><path d="M2.6 3.3L11.4 10.7M11.4 3.3L2.6 10.7" stroke="#f59018" stroke-width="3.6" stroke-linecap="round"/><path d="M3.2 3.9L10.8 10.1M10.8 3.9L3.2 10.1" stroke="#ffe428" stroke-width="1.8" stroke-linecap="round"/><circle cx="7" cy="7" r="2" fill="#fff040"/></svg><svg style="left:520px;top:311px" width="12" height="12" viewBox="0 0 12 12"><path d="M1.5 6L4.5 9.5L10.5 2" fill="none" stroke="#111" stroke-width="2.8" stroke-linejoin="round"/></svg><div style="position:absolute;left:409px;top:328px;width:336px;height:20px;background:#d9effd"></div><div style="position:absolute;left:542px;top:330.00px;font-size:13px;line-height:13px;height:13px;white-space:pre;color:#333;font-family:'Liberation Sans', sans-serif;">11:30</div><div style="position:absolute;left:409px;top:348px;width:336px;height:20px;background:#ddf9e0"></div><div style="position:absolute;left:542px;top:350.00px;font-size:13px;line-height:13px;height:13px;white-space:pre;color:#333;font-family:'Liberation Sans', sans-serif;">12:00</div><div style="position:absolute;left:409px;top:368px;width:336px;height:20px;background:#d9effd"></div><div style="position:absolute;left:542px;top:370.00px;font-size:13px;line-height:13px;height:13px;white-space:pre;color:#333;font-family:'Liberation Sans', sans-serif;">12:30</div><div style="position:absolute;left:409px;top:388px;width:336px;height:20px;background:#ddf9e0"></div><div style="position:absolute;left:542px;top:390.00px;font-size:13px;line-height:13px;height:13px;white-space:pre;color:#333;font-family:'Liberation Sans', sans-serif;">13:00</div><div style="position:absolute;left:409px;top:408px;width:336px;height:20px;background:#d9effd"></div><div style="position:absolute;left:542px;top:410.00px;font-size:13px;line-height:13px;height:13px;white-space:pre;color:#333;font-family:'Liberation Sans', sans-serif;">13:30</div><div style="position:absolute;left:409px;top:428px;width:336px;height:20px;background:#ddf9e0"></div><div style="position:absolute;left:542px;top:430.00px;font-size:13px;line-height:13px;height:13px;white-space:pre;color:#333;font-family:'Liberation Sans', sans-serif;">14:00</div><div style="position:absolute;left:409px;top:448px;width:336px;height:20px;background:#d9effd"></div><div style="position:absolute;left:542px;top:450.00px;font-size:13px;line-height:13px;height:13px;white-space:pre;color:#333;font-family:'Liberation Sans', sans-serif;">14:30</div><div style="position:absolute;left:409px;top:468px;width:336px;height:20px;background:#ddf9e0"></div><div style="position:absolute;left:542px;top:470.00px;font-size:13px;line-height:13px;height:13px;white-space:pre;color:#333;font-family:'Liberation Sans', sans-serif;">15:00</div><div style="position:absolute;left:409px;top:488px;width:336px;height:20px;background:#d9effd"></div><div style="position:absolute;left:542px;top:490.00px;font-size:13px;line-height:13px;height:13px;white-space:pre;color:#333;font-family:'Liberation Sans', sans-serif;">15:30</div><div style="position:absolute;left:409px;top:508px;width:336px;height:20px;background:#ddf9e0"></div><div style="position:absolute;left:542px;top:510.00px;font-size:13px;line-height:13px;height:13px;white-space:pre;color:#333;font-family:'Liberation Sans', sans-serif;">16:00</div><div style="position:absolute;left:409px;top:528px;width:336px;height:20px;background:#d9effd"></div><div style="position:absolute;left:542px;top:530.00px;font-size:13px;line-height:13px;height:13px;white-space:pre;color:#333;font-family:'Liberation Sans', sans-serif;">16:30</div><div style="position:absolute;left:409px;top:548px;width:336px;height:20px;background:#ddf9e0"></div><div style="position:absolute;left:542px;top:550.00px;font-size:13px;line-height:13px;height:13px;white-space:pre;color:#333;font-family:'Liberation Sans', sans-serif;">17:00</div><div style="position:absolute;left:409px;top:568px;width:336px;height:20px;background:#d9effd"></div><div style="position:absolute;left:542px;top:570.00px;font-size:13px;line-height:13px;height:13px;white-space:pre;color:#333;font-family:'Liberation Sans', sans-serif;">17:30</div><div style="position:absolute;left:409px;top:588px;width:336px;height:20px;background:#ddf9e0"></div><div style="position:absolute;left:542px;top:590.00px;font-size:13px;line-height:13px;height:13px;white-space:pre;color:#333;font-family:'Liberation Sans', sans-serif;">18:00</div><div style="position:absolute;left:409px;top:608px;width:336px;height:20px;background:#d9effd"></div><div style="position:absolute;left:542px;top:610.00px;font-size:13px;line-height:13px;height:13px;white-space:pre;color:#333;font-family:'Liberation Sans', sans-serif;">18:30</div><div style="position:absolute;left:409px;top:628px;width:336px;height:20px;background:#ddf9e0"></div><div style="position:absolute;left:542px;top:630.00px;font-size:13px;line-height:13px;height:13px;white-space:pre;color:#333;font-family:'Liberation Sans', sans-serif;">19:00</div><div style="position:absolute;left:409px;top:648px;width:336px;height:20px;background:#d9effd"></div><div style="position:absolute;left:542px;top:650.00px;font-size:13px;line-height:13px;height:13px;white-space:pre;color:#333;font-family:'Liberation Sans', sans-serif;">19:30</div><div style="position:absolute;left:409px;top:668px;width:336px;height:34px;background:#ddf9e0"></div><div style="position:absolute;left:442px;top:668px;width:303px;height:34px;background:#0079c1;"></div><svg style="left:417px;top:677px" width="16" height="16" viewBox="0 0 16 16"><circle cx="8" cy="8" r="7.2" fill="none" stroke="#555" stroke-width="1.3"/><path d="M5 5L11 11M11 6.5V11H6.5" fill="none" stroke="#555" stroke-width="1.3"/></svg><div style="position:absolute;left:443.6px;top:670.82px;font-size:13.8px;line-height:13.8px;height:13.8px;white-space:pre;color:#ffffff;font-family:'Liberation Sans', sans-serif;">23.08.2024</div><div style="position:absolute;left:644.6px;top:672.17px;font-size:12.2px;line-height:12.2px;height:12.2px;white-space:pre;color:#ffffff;font-family:'Liberation Sans', sans-serif;">Jumuah</div><div style="position:absolute;left:409px;top:702px;width:336px;height:20px;background:#d9effd"></div><div style="position:absolute;left:542px;top:704.00px;font-size:13px;line-height:13px;height:13px;white-space:pre;color:#333;font-family:'Liberation Sans', sans-serif;">10:00</div><div style="position:absolute;left:409px;top:722px;width:336px;height:20px;background:#ddf9e0"></div><div style="position:absolute;left:542px;top:724.00px;font-size:13px;line-height:13px;height:13px;white-space:pre;color:#333;font-family:'Liberation Sans', sans-serif;">10:30</div><div style="position:absolute;left:409px;top:742px;width:336px;height:20px;background:#d9effd"></div><div style="position:absolute;left:542px;top:744.00px;font-size:13px;line-height:13px;height:13px;white-space:pre;color:#333;font-family:'Liberation Sans', sans-serif;">11:00</div><div style="position:absolute;left:409px;top:762px;width:336px;height:20px;background:#ddf9e0"></div><div style="position:absolute;left:542px;top:764.00px;font-size:13px;line-height:13px;height:13px;white-space:pre;color:#333;font-family:'Liberation Sans', sans-serif;">11:30</div><div style="position:absolute;left:409px;top:782px;width:336px;height:20px;background:#d9effd"></div><div style="position:absolute;left:541px;top:782px;width:204px;height:20px;background:#fffbbe"></div><div style="position:absolute;left:542px;top:784.00px;font-size:13px;line-height:13px;height:13px;white-space:pre;color:#c8161e;font-family:'Liberation Sans', sans-serif;">12:00</div><div style="position:absolute;left:591px;top:783.66px;font-size:13.4px;line-height:13.4px;height:13.4px;white-space:pre;color:#c8161e;font-family:'Liberation Sans', sans-serif;">111111</div><div style="position:absolute;left:644.6px;top:784.00px;font-size:13px;line-height:13px;height:13px;white-space:pre;color:#c8161e;font-family:'Liberation Sans', sans-serif;">BMW</div><svg style="left:476px;top:781px" width="20" height="20" viewBox="0 0 20 20"><path d="M3.6 5.2Q5 13 14.5 17" fill="none" stroke="#000" stroke-width="4.2" stroke-linecap="round"/><ellipse cx="6" cy="4.3" rx="2.6" ry="1.7" transform="rotate(40 6 4.3)" fill="#f83a20"/><ellipse cx="16.3" cy="15.2" rx="2.6" ry="1.7" transform="rotate(40 16.3 15.2)" fill="#f83a20"/></svg><div style="position:absolute;left:409px;top:802px;width:336px;height:20px;background:#ddf9e0"></div><div style="position:absolute;left:542px;top:804.00px;font-size:13px;line-height:13px;height:13px;white-space:pre;color:#333;font-family:'Liberation Sans', sans-serif;">12:30</div><div style="position:absolute;left:409px;top:822px;width:336px;height:20px;background:#d9effd"></div><div style="position:absolute;left:542px;top:824.00px;font-size:13px;line-height:13px;height:13px;white-space:pre;color:#333;font-family:'Liberation Sans', sans-serif;">13:00</div><div style="position:absolute;left:409px;top:842px;width:336px;height:20px;background:#ddf9e0"></div><div style="position:absolute;left:542px;top:844.00px;font-size:13px;line-height:13px;height:13px;white-space:pre;color:#333;font-family:'Liberation Sans', sans-serif;">13:30</div><div style="position:absolute;left:409px;top:862px;width:336px;height:20px;background:#d9effd"></div><div style="position:absolute;left:542px;top:864.00px;font-size:13px;line-height:13px;height:13px;white-space:pre;color:#333;font-family:'Liberation Sans', sans-serif;">14:00</div></div><div style="position:absolute;left:745px;top:167px;width:1px;height:707px;background:#c8c8c8"></div><svg style="left:752px;top:175px" width="8" height="4"><path d="M0 4H8L4 0Z" fill="#777"/></svg><div style="position:absolute;left:751px;top:188px;width:10px;height:489px;background:#bcbcbc"></div><svg style="left:752px;top:862px" width="8" height="4"><path d="M0 0H8L4 4Z" fill="#777"/></svg><div style="position:absolute;left:775px;top:165px;width:360px;height:710px;border:2px solid #c4c4c4;border-right-width:1px;border-bottom-width:1px;background:#fff;"></div><div style="position:absolute;left:777px;top:167px;width:336px;height:32px;background:#f5f5f5"></div><div style="position:absolute;left:777px;top:199px;width:336px;height:1px;background:#c8c8c8"></div><div style="position:absolute;left:777px;top:200px;width:336px;height:33px;background:#f5f5f5"></div><div style="position:absolute;left:777px;top:233px;width:336px;height:1px;background:#c8c8c8"></div><div style="position:absolute;left:908px;top:200px;width:1px;height:33px;background:#c8c8c8"></div><div style="position:absolute;left:958px;top:200px;width:1px;height:33px;background:#c8c8c8"></div><div style="position:absolute;left:1012px;top:200px;width:1px;height:33px;background:#c8c8c8"></div><div style="position:absolute;left:775px;top:177.5px;width:360px;text-align:center;font-size:13.2px;line-height:13.2px;white-space:pre;color:#333;">2. Karyawan 2 (Utama)</div><div style="position:absolute;left:805.7px;top:210.49px;font-size:13.6px;line-height:13.6px;height:13.6px;white-space:pre;color:#333;font-family:'Liberation Sans', sans-serif;">Tanggal</div><svg style="left:887px;top:216px" width="10" height="5"><path d="M0 5H10L5 0Z" fill="#666"/></svg><div style="position:absolute;left:914px;top:210.87px;font-size:13.5px;line-height:13.5px;height:13.5px;white-space:pre;color:#333;font-family:'Liberation Sans', sans-serif;">Wektu</div><div style="position:absolute;left:981px;top:210.87px;font-size:13.5px;line-height:13.5px;height:13.5px;white-space:pre;color:#333;font-family:'Liberation Sans', sans-serif;">#</div><div style="position:absolute;left:1060px;top:211.80px;font-size:12.4px;line-height:12.4px;height:12.4px;white-space:pre;color:#333;font-family:'Liberation Sans', sans-serif;">Klien</div><div style="position:absolute;left:0;top:0;width:1113px;height:874px;overflow:hidden;"><div style="position:absolute;left:777px;top:234px;width:336px;height:34px;background:#d9effd"></div><div style="position:absolute;left:810px;top:234px;width:303px;height:34px;background:#0079c1;"></div><svg style="left:785px;top:243px" width="16" height="16" viewBox="0 0 16 16"><circle cx="8" cy="8" r="7.2" fill="none" stroke="#555" stroke-width="1.3"/><path d="M5 5L11 11M11 6.5V11H6.5" fill="none" stroke="#555" stroke-width="1.3"/></svg><div style="position:absolute;left:811.6px;top:236.82px;font-size:13.8px;line-height:13.8px;height:13.8px;white-space:pre;color:#00e4ff;font-family:'Liberation Sans', sans-serif;">22.08.2024</div><div style="position:absolute;left:1012.6px;top:238.17px;font-size:12.2px;line-height:12.2px;height:12.2px;white-space:pre;color:#00e4ff;font-family:'Liberation Sans', sans-serif;">Kemis</div><div style="position:absolute;left:777px;top:268px;width:336px;height:20px;background:#ddf9e0"></div><div style="position:absolute;left:910px;top:270.00px;font-size:13px;line-height:13px;height:13px;white-space:pre;color:#333;font-family:'Liberation Sans', sans-serif;">10:00</div><div style="position:absolute;left:777px;top:288px;width:336px;height:20px;background:#d9effd"></div><div style="position:absolute;left:910px;top:290.00px;font-size:13px;line-height:13px;height:13px;white-space:pre;color:#333;font-family:'Liberation Sans', sans-serif;">10:30</div><div style="position:absolute;left:777px;top:308px;width:336px;height:20px;background:#ddf9e0"></div><div style="position:absolute;left:910px;top:310.00px;font-size:13px;line-height:13px;height:13px;white-space:pre;color:#333;font-family:'Liberation Sans', sans-serif;">11:00</div><div style="position:absolute;left:777px;top:328px;width:336px;height:20px;background:#d9effd"></div><div style="position:absolute;left:910px;top:330.00px;font-size:13px;line-height:13px;height:13px;white-space:pre;color:#333;font-family:'Liberation Sans', sans-serif;">11:30</div><div style="position:absolute;left:777px;top:348px;width:336px;height:20px;background:#ddf9e0"></div><div style="position:absolute;left:910px;top:350.00px;font-size:13px;line-height:13px;height:13px;white-space:pre;color:#333;font-family:'Liberation Sans', sans-serif;">12:00</div><div style="position:absolute;left:777px;top:368px;width:336px;height:20px;background:#d9effd"></div><div style="position:absolute;left:910px;top:370.00px;font-size:13px;line-height:13px;height:13px;white-space:pre;color:#333;font-family:'Liberation Sans', sans-serif;">12:30</div><div style="position:absolute;left:777px;top:388px;width:336px;height:20px;background:#ddf9e0"></div><div style="position:absolute;left:910px;top:390.00px;font-size:13px;line-height:13px;height:13px;white-space:pre;color:#333;font-family:'Liberation Sans', sans-serif;">13:00</div><div style="position:absolute;left:777px;top:408px;width:336px;height:20px;background:#d9effd"></div><div style="position:absolute;left:910px;top:410.00px;font-size:13px;line-height:13px;height:13px;white-space:pre;color:#333;font-family:'Liberation Sans', sans-serif;">13:30</div><div style="position:absolute;left:777px;top:428px;width:336px;height:20px;background:#ddf9e0"></div><div style="position:absolute;left:910px;top:430.00px;font-size:13px;line-height:13px;height:13px;white-space:pre;color:#333;font-family:'Liberation Sans', sans-serif;">14:00</div><div style="position:absolute;left:777px;top:448px;width:336px;height:20px;background:#d9effd"></div><div style="position:absolute;left:909px;top:448px;width:204px;height:20px;background:#fffbbe"></div><div style="position:absolute;left:910px;top:450.00px;font-size:13px;line-height:13px;height:13px;white-space:pre;color:#c8161e;font-family:'Liberation Sans', sans-serif;">14:30</div><div style="position:absolute;left:959px;top:449.66px;font-size:13.4px;line-height:13.4px;height:13.4px;white-space:pre;color:#c8161e;font-family:'Liberation Sans', sans-serif;">000000</div><div style="position:absolute;left:1012.6px;top:450.00px;font-size:13px;line-height:13px;height:13px;white-space:pre;color:#c8161e;font-family:'Liberation Sans', sans-serif;">Organisasi: Wong</div><svg style="left:864px;top:448px" width="20" height="20" viewBox="0 0 20 20"><path d="M1.5 1.5H12.5L17 6V18.5H1.5Z" fill="#fafafa" stroke="#a8a8a8" stroke-width="1"/><path d="M12.5 1.5V6H17" fill="#e8e8e8" stroke="#a8a8a8" stroke-width="1"/></svg><svg style="left:888px;top:451px" width="12" height="12" viewBox="0 0 12 12"><path d="M1.5 6L4.5 9.5L10.5 2" fill="none" stroke="#111" stroke-width="2.8" stroke-linejoin="round"/></svg><div style="position:absolute;left:777px;top:468px;width:336px;height:20px;background:#ddf9e0"></div><div style="position:absolute;left:910px;top:470.00px;font-size:13px;line-height:13px;height:13px;white-space:pre;color:#333;font-family:'Liberation Sans', sans-serif;">15:00</div><div style="position:absolute;left:777px;top:488px;width:336px;height:20px;background:#d9effd"></div><div style="position:absolute;left:910px;top:490.00px;font-size:13px;line-height:13px;height:13px;white-space:pre;color:#333;font-family:'Liberation Sans', sans-serif;">15:30</div><div style="position:absolute;left:777px;top:508px;width:336px;height:20px;background:#ddf9e0"></div><div style="position:absolute;left:910px;top:510.00px;font-size:13px;line-height:13px;height:13px;white-space:pre;color:#333;font-family:'Liberation Sans', sans-serif;">16:00</div><div style="position:absolute;left:777px;top:528px;width:336px;height:20px;background:#d9effd"></div><div style="position:absolute;left:910px;top:530.00px;font-size:13px;line-height:13px;height:13px;white-space:pre;color:#333;font-family:'Liberation Sans', sans-serif;">16:30</div><div style="position:absolute;left:777px;top:548px;width:336px;height:20px;background:#ddf9e0"></div><div style="position:absolute;left:910px;top:550.00px;font-size:13px;line-height:13px;height:13px;white-space:pre;color:#333;font-family:'Liberation Sans', sans-serif;">17:00</div><div style="position:absolute;left:777px;top:568px;width:336px;height:20px;background:#d9effd"></div><div style="position:absolute;left:910px;top:570.00px;font-size:13px;line-height:13px;height:13px;white-space:pre;color:#333;font-family:'Liberation Sans', sans-serif;">17:30</div><div style="position:absolute;left:777px;top:588px;width:336px;height:20px;background:#ddf9e0"></div><div style="position:absolute;left:910px;top:590.00px;font-size:13px;line-height:13px;height:13px;white-space:pre;color:#333;font-family:'Liberation Sans', sans-serif;">18:00</div><div style="position:absolute;left:777px;top:608px;width:336px;height:20px;background:#d9effd"></div><div style="position:absolute;left:910px;top:610.00px;font-size:13px;line-height:13px;height:13px;white-space:pre;color:#333;font-family:'Liberation Sans', sans-serif;">18:30</div><div style="position:absolute;left:777px;top:628px;width:336px;height:20px;background:#ddf9e0"></div><div style="position:absolute;left:910px;top:630.00px;font-size:13px;line-height:13px;height:13px;white-space:pre;color:#333;font-family:'Liberation Sans', sans-serif;">19:00</div><div style="position:absolute;left:777px;top:648px;width:336px;height:20px;background:#d9effd"></div><div style="position:absolute;left:910px;top:650.00px;font-size:13px;line-height:13px;height:13px;white-space:pre;color:#333;font-family:'Liberation Sans', sans-serif;">19:30</div><div style="position:absolute;left:777px;top:668px;width:336px;height:34px;background:#ddf9e0"></div><div style="position:absolute;left:810px;top:668px;width:303px;height:34px;background:#0079c1;"></div><svg style="left:785px;top:677px" width="16" height="16" viewBox="0 0 16 16"><circle cx="8" cy="8" r="7.2" fill="none" stroke="#555" stroke-width="1.3"/><path d="M5 5L11 11M11 6.5V11H6.5" fill="none" stroke="#555" stroke-width="1.3"/></svg><div style="position:absolute;left:811.6px;top:670.82px;font-size:13.8px;line-height:13.8px;height:13.8px;white-space:pre;color:#ffffff;font-family:'Liberation Sans', sans-serif;">23.08.2024</div><div style="position:absolute;left:1012.6px;top:672.17px;font-size:12.2px;line-height:12.2px;height:12.2px;white-space:pre;color:#ffffff;font-family:'Liberation Sans', sans-serif;">Jumuah</div><div style="position:absolute;left:777px;top:702px;width:336px;height:20px;background:#d9effd"></div><div style="position:absolute;left:910px;top:704.00px;font-size:13px;line-height:13px;height:13px;white-space:pre;color:#333;font-family:'Liberation Sans', sans-serif;">10:00</div><div style="position:absolute;left:777px;top:722px;width:336px;height:20px;background:#ddf9e0"></div><div style="position:absolute;left:910px;top:724.00px;font-size:13px;line-height:13px;height:13px;white-space:pre;color:#333;font-family:'Liberation Sans', sans-serif;">10:30</div><div style="position:absolute;left:777px;top:742px;width:336px;height:20px;background:#d9effd"></div><div style="position:absolute;left:910px;top:744.00px;font-size:13px;line-height:13px;height:13px;white-space:pre;color:#333;font-family:'Liberation Sans', sans-serif;">11:00</div><div style="position:absolute;left:777px;top:762px;width:336px;height:20px;background:#ddf9e0"></div><div style="position:absolute;left:910px;top:764.00px;font-size:13px;line-height:13px;height:13px;white-space:pre;color:#333;font-family:'Liberation Sans', sans-serif;">11:30</div><div style="position:absolute;left:777px;top:782px;width:336px;height:20px;background:#d9effd"></div><div style="position:absolute;left:910px;top:784.00px;font-size:13px;line-height:13px;height:13px;white-space:pre;color:#333;font-family:'Liberation Sans', sans-serif;">12:00</div><div style="position:absolute;left:777px;top:802px;width:336px;height:20px;background:#ddf9e0"></div><div style="position:absolute;left:910px;top:804.00px;font-size:13px;line-height:13px;height:13px;white-space:pre;color:#333;font-family:'Liberation Sans', sans-serif;">12:30</div><div style="position:absolute;left:777px;top:822px;width:336px;height:20px;background:#d9effd"></div><div style="position:absolute;left:910px;top:824.00px;font-size:13px;line-height:13px;height:13px;white-space:pre;color:#333;font-family:'Liberation Sans', sans-serif;">13:00</div><div style="position:absolute;left:777px;top:842px;width:336px;height:20px;background:#ddf9e0"></div><div style="position:absolute;left:910px;top:844.00px;font-size:13px;line-height:13px;height:13px;white-space:pre;color:#333;font-family:'Liberation Sans', sans-serif;">13:30</div><div style="position:absolute;left:777px;top:862px;width:336px;height:20px;background:#d9effd"></div><div style="position:absolute;left:910px;top:864.00px;font-size:13px;line-height:13px;height:13px;white-space:pre;color:#333;font-family:'Liberation Sans', sans-serif;">14:00</div></div><div style="position:absolute;left:1113px;top:167px;width:1px;height:707px;background:#c8c8c8"></div><svg style="left:1120px;top:175px" width="8" height="4"><path d="M0 4H8L4 0Z" fill="#777"/></svg><div style="position:absolute;left:1119px;top:188px;width:10px;height:489px;background:#bcbcbc"></div><svg style="left:1120px;top:862px" width="8" height="4"><path d="M0 0H8L4 4Z" fill="#777"/></svg><div style="position:absolute;left:1142px;top:165px;width:360px;height:710px;border:2px solid #c4c4c4;border-right-width:1px;border-bottom-width:1px;background:#fff;"></div><div style="position:absolute;left:1144px;top:167px;width:336px;height:32px;background:#f5f5f5"></div><div style="position:absolute;left:1144px;top:199px;width:336px;height:1px;background:#c8c8c8"></div><div style="position:absolute;left:1144px;top:200px;width:336px;height:33px;background:#f5f5f5"></div><div style="position:absolute;left:1144px;top:233px;width:336px;height:1px;background:#c8c8c8"></div><div style="position:absolute;left:1275px;top:200px;width:1px;height:33px;background:#c8c8c8"></div><div style="position:absolute;left:1325px;top:200px;width:1px;height:33px;background:#c8c8c8"></div><div style="position:absolute;left:1379px;top:200px;width:1px;height:33px;background:#c8c8c8"></div><div style="position:absolute;left:1142px;top:177.5px;width:360px;text-align:center;font-size:13.2px;line-height:13.2px;white-space:pre;color:#333;">3. Karyawan 3 (Utama)</div><div style="position:absolute;left:1172.7px;top:210.49px;font-size:13.6px;line-height:13.6px;height:13.6px;white-space:pre;color:#333;font-family:'Liberation Sans', sans-serif;">Tanggal</div><svg style="left:1254px;top:216px" width="10" height="5"><path d="M0 5H10L5 0Z" fill="#666"/></svg><div style="position:absolute;left:1281px;top:210.87px;font-size:13.5px;line-height:13.5px;height:13.5px;white-space:pre;color:#333;font-family:'Liberation Sans', sans-serif;">Wektu</div><div style="position:absolute;left:1348px;top:210.87px;font-size:13.5px;line-height:13.5px;height:13.5px;white-space:pre;color:#333;font-family:'Liberation Sans', sans-serif;">#</div><div style="position:absolute;left:1427px;top:211.80px;font-size:12.4px;line-height:12.4px;height:12.4px;white-space:pre;color:#333;font-family:'Liberation Sans', sans-serif;">Klien</div><div style="position:absolute;left:0;top:0;width:1480px;height:874px;overflow:hidden;"><div style="position:absolute;left:1144px;top:234px;width:336px;height:34px;background:#d9effd"></div><div style="position:absolute;left:1177px;top:234px;width:303px;height:34px;background:#0079c1;"></div><svg style="left:1152px;top:243px" width="16" height="16" viewBox="0 0 16 16"><circle cx="8" cy="8" r="7.2" fill="none" stroke="#555" stroke-width="1.3"/><path d="M5 5L11 11M11 6.5V11H6.5" fill="none" stroke="#555" stroke-width="1.3"/></svg><div style="position:absolute;left:1178.6px;top:236.82px;font-size:13.8px;line-height:13.8px;height:13.8px;white-space:pre;color:#00e4ff;font-family:'Liberation Sans', sans-serif;">22.08.2024</div><div style="position:absolute;left:1379.6px;top:238.17px;font-size:12.2px;line-height:12.2px;height:12.2px;white-space:pre;color:#00e4ff;font-family:'Liberation Sans', sans-serif;">Kemis</div><div style="position:absolute;left:1144px;top:268px;width:336px;height:20px;background:#ddf9e0"></div><div style="position:absolute;left:1277px;top:270.00px;font-size:13px;line-height:13px;height:13px;white-space:pre;color:#333;font-family:'Liberation Sans', sans-serif;">10:00</div><div style="position:absolute;left:1144px;top:288px;width:336px;height:20px;background:#d9effd"></div><div style="position:absolute;left:1277px;top:290.00px;font-size:13px;line-height:13px;height:13px;white-space:pre;color:#333;font-family:'Liberation Sans', sans-serif;">10:30</div><div style="position:absolute;left:1144px;top:308px;width:336px;height:20px;background:#ddf9e0"></div><div style="position:absolute;left:1277px;top:310.00px;font-size:13px;line-height:13px;height:13px;white-space:pre;color:#333;font-family:'Liberation Sans', sans-serif;">11:00</div><div style="position:absolute;left:1144px;top:328px;width:336px;height:20px;background:#d9effd"></div><div style="position:absolute;left:1276px;top:328px;width:204px;height:20px;background:#fffbbe"></div><div style="position:absolute;left:1277px;top:330.00px;font-size:13px;line-height:13px;height:13px;white-space:pre;color:#c8161e;font-family:'Liberation Sans', sans-serif;">11:30</div><div style="position:absolute;left:1326px;top:329.66px;font-size:13.4px;line-height:13.4px;height:13.4px;white-space:pre;color:#c8161e;font-family:'Liberation Sans', sans-serif;">123456</div><div style="position:absolute;left:1379.6px;top:330.00px;font-size:13px;line-height:13px;height:13px;white-space:pre;color:#c8161e;font-family:'Liberation Sans', sans-serif;">Toyota camry</div><svg style="left:1229px;top:329px" width="22" height="17" viewBox="0 0 22 17"><path d="M2 8.5C5 4 8.5 2.5 11 2.5S17 4 20 8.5C17 13 13.5 14.5 11 14.5S5 13 2 8.5Z" fill="#fafafa"/><path d="M2 8.5C5 4 8.5 2.5 11 2.5S17 4 20 8.5" fill="none" stroke="#c88a58" stroke-width="1.6"/><path d="M2 8.5C5 13 8.5 14.5 11 14.5S17 13 20 8.5" fill="none" stroke="#7a78b8" stroke-width="1.4"/><circle cx="11" cy="8" r="4.4" fill="#7086a8" stroke="#506080" stroke-width="0.8"/><circle cx="11" cy="7.6" r="1.8" fill="#223"/></svg><svg style="left:1255px;top:331px" width="12" height="12" viewBox="0 0 12 12"><path d="M1.5 6L4.5 9.5L10.5 2" fill="none" stroke="#111" stroke-width="2.8" stroke-linejoin="round"/></svg><div style="position:absolute;left:1144px;top:348px;width:336px;height:20px;background:#ddf9e0"></div><div style="position:absolute;left:1277px;top:350.00px;font-size:13px;line-height:13px;height:13px;white-space:pre;color:#333;font-family:'Liberation Sans', sans-serif;">12:00</div><div style="position:absolute;left:1144px;top:368px;width:336px;height:20px;background:#d9effd"></div><div style="position:absolute;left:1277px;top:370.00px;font-size:13px;line-height:13px;height:13px;white-space:pre;color:#333;font-family:'Liberation Sans', sans-serif;">12:30</div><div style="position:absolute;left:1144px;top:388px;width:336px;height:20px;background:#ddf9e0"></div><div style="position:absolute;left:1277px;top:390.00px;font-size:13px;line-height:13px;height:13px;white-space:pre;color:#333;font-family:'Liberation Sans', sans-serif;">13:00</div><div style="position:absolute;left:1144px;top:408px;width:336px;height:20px;background:#d9effd"></div><div style="position:absolute;left:1277px;top:410.00px;font-size:13px;line-height:13px;height:13px;white-space:pre;color:#333;font-family:'Liberation Sans', sans-serif;">13:30</div><div style="position:absolute;left:1144px;top:428px;width:336px;height:20px;background:#ddf9e0"></div><div style="position:absolute;left:1277px;top:430.00px;font-size:13px;line-height:13px;height:13px;white-space:pre;color:#333;font-family:'Liberation Sans', sans-serif;">14:00</div><div style="position:absolute;left:1144px;top:448px;width:336px;height:20px;background:#d9effd"></div><div style="position:absolute;left:1277px;top:450.00px;font-size:13px;line-height:13px;height:13px;white-space:pre;color:#333;font-family:'Liberation Sans', sans-serif;">14:30</div><div style="position:absolute;left:1144px;top:468px;width:336px;height:20px;background:#ddf9e0"></div><div style="position:absolute;left:1277px;top:470.00px;font-size:13px;line-height:13px;height:13px;white-space:pre;color:#333;font-family:'Liberation Sans', sans-serif;">15:00</div><div style="position:absolute;left:1144px;top:488px;width:336px;height:20px;background:#d9effd"></div><div style="position:absolute;left:1277px;top:490.00px;font-size:13px;line-height:13px;height:13px;white-space:pre;color:#333;font-family:'Liberation Sans', sans-serif;">15:30</div><div style="position:absolute;left:1144px;top:508px;width:336px;height:20px;background:#ddf9e0"></div><div style="position:absolute;left:1277px;top:510.00px;font-size:13px;line-height:13px;height:13px;white-space:pre;color:#333;font-family:'Liberation Sans', sans-serif;">16:00</div><div style="position:absolute;left:1144px;top:528px;width:336px;height:20px;background:#d9effd"></div><div style="position:absolute;left:1277px;top:530.00px;font-size:13px;line-height:13px;height:13px;white-space:pre;color:#333;font-family:'Liberation Sans', sans-serif;">16:30</div><div style="position:absolute;left:1144px;top:548px;width:336px;height:20px;background:#ddf9e0"></div><div style="position:absolute;left:1277px;top:550.00px;font-size:13px;line-height:13px;height:13px;white-space:pre;color:#333;font-family:'Liberation Sans', sans-serif;">17:00</div><div style="position:absolute;left:1144px;top:568px;width:336px;height:20px;background:#d9effd"></div><div style="position:absolute;left:1277px;top:570.00px;font-size:13px;line-height:13px;height:13px;white-space:pre;color:#333;font-family:'Liberation Sans', sans-serif;">17:30</div><div style="position:absolute;left:1144px;top:588px;width:336px;height:20px;background:#ddf9e0"></div><div style="position:absolute;left:1277px;top:590.00px;font-size:13px;line-height:13px;height:13px;white-space:pre;color:#333;font-family:'Liberation Sans', sans-serif;">18:00</div><div style="position:absolute;left:1144px;top:608px;width:336px;height:20px;background:#d9effd"></div><div style="position:absolute;left:1277px;top:610.00px;font-size:13px;line-height:13px;height:13px;white-space:pre;color:#333;font-family:'Liberation Sans', sans-serif;">18:30</div><div style="position:absolute;left:1144px;top:628px;width:336px;height:20px;background:#ddf9e0"></div><div style="position:absolute;left:1277px;top:630.00px;font-size:13px;line-height:13px;height:13px;white-space:pre;color:#333;font-family:'Liberation Sans', sans-serif;">19:00</div><div style="position:absolute;left:1144px;top:648px;width:336px;height:20px;background:#d9effd"></div><div style="position:absolute;left:1277px;top:650.00px;font-size:13px;line-height:13px;height:13px;white-space:pre;color:#333;font-family:'Liberation Sans', sans-serif;">19:30</div><div style="position:absolute;left:1144px;top:668px;width:336px;height:34px;background:#ddf9e0"></div><div style="position:absolute;left:1177px;top:668px;width:303px;height:34px;background:#0079c1;"></div><svg style="left:1152px;top:677px" width="16" height="16" viewBox="0 0 16 16"><circle cx="8" cy="8" r="7.2" fill="none" stroke="#555" stroke-width="1.3"/><path d="M5 5L11 11M11 6.5V11H6.5" fill="none" stroke="#555" stroke-width="1.3"/></svg><div style="position:absolute;left:1178.6px;top:670.82px;font-size:13.8px;line-height:13.8px;height:13.8px;white-space:pre;color:#ffffff;font-family:'Liberation Sans', sans-serif;">23.08.2024</div><div style="position:absolute;left:1379.6px;top:672.17px;font-size:12.2px;line-height:12.2px;height:12.2px;white-space:pre;color:#ffffff;font-family:'Liberation Sans', sans-serif;">Jumuah</div><div style="position:absolute;left:1144px;top:702px;width:336px;height:20px;background:#d9effd"></div><div style="position:absolute;left:1277px;top:704.00px;font-size:13px;line-height:13px;height:13px;white-space:pre;color:#333;font-family:'Liberation Sans', sans-serif;">10:00</div><div style="position:absolute;left:1144px;top:722px;width:336px;height:20px;background:#ddf9e0"></div><div style="position:absolute;left:1277px;top:724.00px;font-size:13px;line-height:13px;height:13px;white-space:pre;color:#333;font-family:'Liberation Sans', sans-serif;">10:30</div><div style="position:absolute;left:1144px;top:742px;width:336px;height:20px;background:#d9effd"></div><div style="position:absolute;left:1277px;top:744.00px;font-size:13px;line-height:13px;height:13px;white-space:pre;color:#333;font-family:'Liberation Sans', sans-serif;">11:00</div><div style="position:absolute;left:1144px;top:762px;width:336px;height:20px;background:#ddf9e0"></div><div style="position:absolute;left:1277px;top:764.00px;font-size:13px;line-height:13px;height:13px;white-space:pre;color:#333;font-family:'Liberation Sans', sans-serif;">11:30</div><div style="position:absolute;left:1144px;top:782px;width:336px;height:20px;background:#d9effd"></div><div style="position:absolute;left:1277px;top:784.00px;font-size:13px;line-height:13px;height:13px;white-space:pre;color:#333;font-family:'Liberation Sans', sans-serif;">12:00</div><div style="position:absolute;left:1144px;top:802px;width:336px;height:20px;background:#ddf9e0"></div><div style="position:absolute;left:1277px;top:804.00px;font-size:13px;line-height:13px;height:13px;white-space:pre;color:#333;font-family:'Liberation Sans', sans-serif;">12:30</div><div style="position:absolute;left:1144px;top:822px;width:336px;height:20px;background:#d9effd"></div><div style="position:absolute;left:1277px;top:824.00px;font-size:13px;line-height:13px;height:13px;white-space:pre;color:#333;font-family:'Liberation Sans', sans-serif;">13:00</div><div style="position:absolute;left:1144px;top:842px;width:336px;height:20px;background:#ddf9e0"></div><div style="position:absolute;left:1277px;top:844.00px;font-size:13px;line-height:13px;height:13px;white-space:pre;color:#333;font-family:'Liberation Sans', sans-serif;">13:30</div><div style="position:absolute;left:1144px;top:862px;width:336px;height:20px;background:#d9effd"></div><div style="position:absolute;left:1277px;top:864.00px;font-size:13px;line-height:13px;height:13px;white-space:pre;color:#333;font-family:'Liberation Sans', sans-serif;">14:00</div></div><div style="position:absolute;left:1480px;top:167px;width:1px;height:707px;background:#c8c8c8"></div><svg style="left:1487px;top:175px" width="8" height="4"><path d="M0 4H8L4 0Z" fill="#777"/></svg><div style="position:absolute;left:1486px;top:188px;width:10px;height:489px;background:#bcbcbc"></div><svg style="left:1487px;top:862px" width="8" height="4"><path d="M0 0H8L4 4Z" fill="#777"/></svg><div style="position:absolute;left:1020px;top:467px;width:2px;height:1px;background:#e05050"></div><div style="position:absolute;left:21px;top:905px;width:1494px;height:2px;background:#d2d2d2"></div><div style="position:absolute;left:192px;top:909px;width:1323px;height:2px;background:#d2d2d2"></div><div style="position:absolute;left:21px;top:905px;width:172px;height:57px;border:2px solid #d2d2d2;border-bottom:none;border-top-width:2px;background:#fff;"></div><div style="position:absolute;left:22px;top:959px;width:170px;height:3px;background:#14a0f0"></div><div style="position:absolute;left:82px;top:928.30px;font-size:13px;line-height:13px;height:13px;white-space:pre;color:#1e9be8;font-family:'Liberation Sans', sans-serif;">Registrasi</div><svg style="left:161px;top:930px" width="10" height="8" viewBox="0 0 10 8"><path d="M0.5 0.3L9.5 7.7M9.5 0.3L0.5 7.7" stroke="#1e9be8" stroke-width="2"/></svg><div style="position:absolute;left:40px;top:922px;width:30px;height:26px;border:1px solid #6688bb;border-radius:2px;background:linear-gradient(#6fa4dc 0,#6fa4dc 6px,#e8eef8 6px,#f4f6fb);"></div><div style="position:absolute;left:63px;top:924px;width:4px;height:4px;background:#f03020;border-radius:2px;"></div><svg style="left:29px;top:964px" width="20" height="20" viewBox="0 0 20 20"><circle cx="10" cy="10" r="10" fill="#4b7fc0"/><rect x="8.4" y="8.5" width="3.2" height="7.5" fill="#fff"/><circle cx="10" cy="5.6" r="1.7" fill="#fff"/></svg><div style="position:absolute;left:70.3px;top:969.52px;font-size:13.8px;line-height:13.8px;height:13.8px;white-space:pre;color:#333;font-family:'Liberation Sans', sans-serif;">7.2.9044.10 Standard</div><div style="position:absolute;left:281.6px;top:968.72px;font-size:13.8px;line-height:13.8px;height:13.8px;white-space:pre;color:#333;font-family:'Liberation Sans', sans-serif;">localhost (utf8)</div><div style="position:absolute;left:451.2px;top:969.40px;font-size:13px;line-height:13px;height:13px;white-space:pre;color:#333;font-family:'Liberation Sans', sans-serif;">NIKOLAY (MAIN)</div><div style="position:absolute;left:631.5px;top:968.72px;font-size:13.8px;line-height:13.8px;height:13.8px;white-space:pre;color:#333;font-family:'Liberation Sans', sans-serif;">22.08.2024</div><div style="position:absolute;left:762px;top:968.55px;font-size:14px;line-height:14px;height:14px;white-space:pre;color:#333;font-family:'Liberation Sans', sans-serif;">00:00:00:001</div><div style="position:absolute;left:229px;top:966px;width:1px;height:18px;background:#c4c4c4"></div><div style="position:absolute;left:399px;top:966px;width:1px;height:18px;background:#c4c4c4"></div><div style="position:absolute;left:578px;top:966px;width:1px;height:18px;background:#c4c4c4"></div><div style="position:absolute;left:727px;top:966px;width:1px;height:18px;background:#c4c4c4"></div><div style="position:absolute;left:876px;top:966px;width:1px;height:18px;background:#c4c4c4"></div><div style="position:absolute;left:1485px;top:966px;width:1px;height:18px;background:#c4c4c4"></div><svg style="left:243px;top:964px" width="16" height="19" viewBox="0 0 16 19"><ellipse cx="8" cy="16" rx="7.3" ry="2.6" fill="#c88028"/><rect x="0.7" y="3" width="14.6" height="13" fill="url(#gDB)"/><ellipse cx="8" cy="3" rx="7.3" ry="2.6" fill="#fde8b8" stroke="#c88028" stroke-width="0.8"/><path d="M0.7 7.5Q8 10.5 15.3 7.5M0.7 11.8Q8 14.8 15.3 11.8" fill="none" stroke="#c07020" stroke-width="0.9"/></svg><svg style="left:412px;top:965px" width="19" height="19" viewBox="0 0 18 18"><path d="M1 17.3C1 13.5 4 11.5 9 11.5S17 13.5 17 17.3Z" fill="url(#gBodyG)" stroke="#5a9030" stroke-width="0.8"/><ellipse cx="9" cy="6.3" rx="4.8" ry="5.6" fill="#b8683a"/><path d="M6.2 6.5Q6.6 4.2 9 4.4Q11.6 4.2 11.8 6.5Q11.8 10.5 9 11.2Q6.2 10.5 6.2 6.5Z" fill="url(#gSkin)"/></svg><svg style="left:591px;top:965px" width="19" height="19" viewBox="0 0 19 19"><rect x="0.6" y="0.6" width="17.8" height="17.8" fill="#f4f6fc" stroke="#6a7ec0" stroke-width="1"/><rect x="0.6" y="0.6" width="17.8" height="4.4" fill="#e0483a"/><text x="9.5" y="15.8" text-anchor="middle" font-family="Liberation Sans" font-weight="bold" font-size="10.5" fill="#2a3a70">31</text></svg><svg style="left:1498px;top:970px" width="14" height="14" viewBox="0 0 14 14"><path d="M10.0 1.5h1v-1h1v1h1v1h-1v1h-1v-1h-1z" fill="#666"/><path d="M5.0 6.5h1v-1h1v1h1v1h-1v1h-1v-1h-1z" fill="#666"/><path d="M10.0 6.5h1v-1h1v1h1v1h-1v1h-1v-1h-1z" fill="#666"/><path d="M0.0 11.5h1v-1h1v1h1v1h-1v1h-1v-1h-1z" fill="#666"/><path d="M5.0 11.5h1v-1h1v1h1v1h-1v1h-1v-1h-1z" fill="#666"/><path d="M10.0 11.5h1v-1h1v1h1v1h-1v1h-1v-1h-1z" fill="#666"/></svg><svg style="left:64px;top:173px" width="17" height="15" viewBox="0 0 17 15"><path d="M0 1.2Q0 0.6 0.6 0.6H7Q7.6 0.6 8.2 1.5L9 3H16.6V5H0Z" fill="#727272"/><rect x="0" y="4.4" width="16.6" height="10.2" fill="#fcc462"/></svg><svg style="left:28px;top:170px" width="18" height="16" viewBox="0 0 18 16"><path d="M0 1.2Q0 0.6 0.6 0.6H7Q7.6 0.6 8.2 1.5L9 3H17.6V5H0Z" fill="#727272"/><rect x="0" y="4.4" width="17.6" height="10.6" fill="#fcc462"/></svg><svg style="left:371px;top:175px" width="11" height="12" viewBox="0 0 11 12"><path d="M2.6 1H9V8H10V9H1.5V8H2.6Z" fill="#8a8a8a"/><rect x="4" y="2" width="1.3" height="5.5" fill="#fff"/><rect x="5.4" y="9" width="1.3" height="3" fill="#8a8a8a"/></svg><svg style="left:319px;top:208px" width="24" height="24" viewBox="0 0 24 24"><path d="M13.5 14L20 20.5" stroke="#b07818" stroke-width="4" stroke-linecap="round"/><path d="M13.8 14.3L19.8 20.3" stroke="#f8c848" stroke-width="2.4" stroke-linecap="round"/><circle cx="8" cy="9" r="6.4" fill="#a8d4fa" stroke="#5078c0" stroke-width="1.3"/><ellipse cx="7.5" cy="7" rx="3.5" ry="2.5" fill="#e8f6ff"/></svg><svg style="left:370px;top:209px" width="22" height="22" viewBox="0 0 22 22"><circle cx="11" cy="11" r="9.3" fill="#f0f6ff" stroke="#2f6ed0" stroke-width="1.7"/><path d="M11 11L16.5 4.5M11 11L7.5 12" stroke="#3050b0" stroke-width="1.4"/><path d="M11 11L13.5 17.5" stroke="#f09070" stroke-width="1.2"/></svg><svg style="left:70px;top:286px" width="18" height="18" viewBox="0 0 18 18"><circle cx="9.3" cy="8.4" r="7.6" fill="none" stroke="#566068" stroke-width="1.6"/><path d="M6.4 5.6L11.5 10.5M11.8 5.5V10.4H6.8" fill="none" stroke="#2f3a44" stroke-width="2"/></svg><svg style="left:88px;top:293px" width="9" height="1" viewBox="0 0 9 1"><path d="M0 0.5H9" stroke="#9aa0a8" stroke-width="1" stroke-dasharray="1 1"/></svg><svg style="left:102px;top:287px" width="22" height="16" viewBox="0 0 22 16"><path d="M0.3 14.5V1.5Q0.3 0.8 1 0.8H6.5L8 2.8H17.3V14.5Z" fill="#6e6e6e"/><path d="M0.5 14.6L7 7H21L17.4 14.6Z" fill="#fdbd58"/></svg><svg style="left:112px;top:304px" width="20" height="92" viewBox="0 0 20 92"><path d="M1.5 0V90" stroke="#b4bcc4" stroke-width="1" stroke-dasharray="1 1"/><path d="M1.5 22.5H18M1.5 56.5H18M1.5 90.5H18" stroke="#b4bcc4" stroke-width="1" stroke-dasharray="1 1"/></svg><svg style="left:137px;top:318px" width="18" height="19" viewBox="0 0 18 18"><path d="M1 17.3C1 13.5 4 11.5 9 11.5S17 13.5 17 17.3Z" fill="url(#gBodyG)" stroke="#5a9030" stroke-width="0.8"/><ellipse cx="9" cy="6.3" rx="4.8" ry="5.6" fill="#b8683a"/><path d="M6.2 6.5Q6.6 4.2 9 4.4Q11.6 4.2 11.8 6.5Q11.8 10.5 9 11.2Q6.2 10.5 6.2 6.5Z" fill="url(#gSkin)"/></svg><svg style="left:137px;top:352px" width="18" height="19" viewBox="0 0 18 18"><path d="M1 17.3C1 13.5 4 11.5 9 11.5S17 13.5 17 17.3Z" fill="url(#gBodyG)" stroke="#5a9030" stroke-width="0.8"/><ellipse cx="9" cy="6.3" rx="4.8" ry="5.6" fill="#b8683a"/><path d="M6.2 6.5Q6.6 4.2 9 4.4Q11.6 4.2 11.8 6.5Q11.8 10.5 9 11.2Q6.2 10.5 6.2 6.5Z" fill="url(#gSkin)"/></svg><svg style="left:137px;top:386px" width="18" height="19" viewBox="0 0 18 18"><path d="M1 17.3C1 13.5 4 11.5 9 11.5S17 13.5 17 17.3Z" fill="url(#gBodyG)" stroke="#5a9030" stroke-width="0.8"/><ellipse cx="9" cy="6.3" rx="4.8" ry="5.6" fill="#b8683a"/><path d="M6.2 6.5Q6.6 4.2 9 4.4Q11.6 4.2 11.8 6.5Q11.8 10.5 9 11.2Q6.2 10.5 6.2 6.5Z" fill="url(#gSkin)"/></svg><svg style="left:30px;top:309px" width="18" height="19" viewBox="0 0 18 18"><path d="M1 17.3C1 13.5 4 11.5 9 11.5S17 13.5 17 17.3Z" fill="url(#gBodyG)" stroke="#5a9030" stroke-width="0.8"/><ellipse cx="9" cy="6.3" rx="4.8" ry="5.6" fill="#b8683a"/><path d="M6.2 6.5Q6.6 4.2 9 4.4Q11.6 4.2 11.8 6.5Q11.8 10.5 9 11.2Q6.2 10.5 6.2 6.5Z" fill="url(#gSkin)"/></svg></body></html>
